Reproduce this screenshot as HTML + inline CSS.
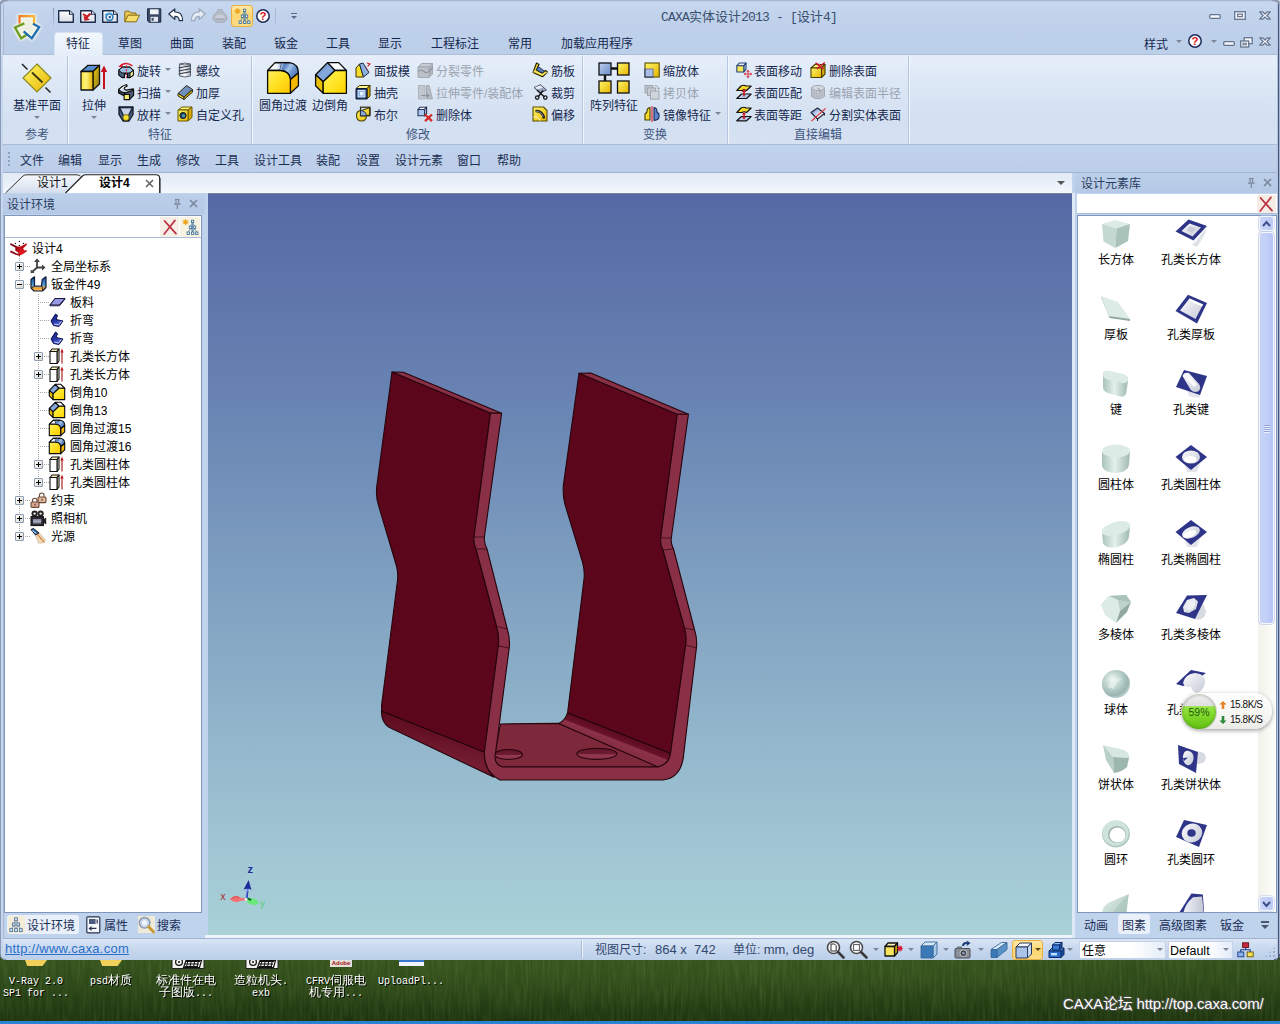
<!DOCTYPE html>
<html><head><meta charset="utf-8"><title>CAXA</title>
<style>
*{margin:0;padding:0;box-sizing:border-box}
html,body{width:1280px;height:1024px;overflow:hidden}
body{position:relative;font-family:"Liberation Sans","Noto Sans CJK SC","WenQuanYi Zen Hei",sans-serif;font-size:12px;color:#000;background:#2b4719}
.a{position:absolute}
.t{position:absolute;white-space:nowrap;line-height:16px;height:16px;font-size:12px}
.c{transform:translateX(-50%)}
.rb{color:#15284f}
.dis{color:#9aa3b0}
.lab{color:#3e5580}
.sep{position:absolute;top:56px;width:2px;height:88px;background:linear-gradient(90deg,#b4c6e0 50%,#f3f7fc 50%)}
.arr{position:absolute;width:0;height:0;border-left:3px solid transparent;border-right:3px solid transparent;border-top:3px solid #7b8797}
svg{position:absolute;overflow:visible}
.dt{position:absolute;white-space:nowrap;color:#fff;font-size:12px;line-height:12px;text-align:center;transform:translateX(-50%);font-family:"Liberation Mono","WenQuanYi Zen Hei","Noto Sans CJK SC",monospace;text-shadow:1px 1px 0 #000}
.tt i{font-style:normal;font-family:'Liberation Mono',monospace;font-size:13px;letter-spacing:-0.8px}
.dt i{font-style:normal;font-size:10px;letter-spacing:0}
</style></head><body>
<div class="a" id="desk" style="left:0;top:958px;width:1280px;height:64px;background:linear-gradient(#33501c,#2c4718 40%,#223a12 80%,#1d3310)"></div>
<svg style="left:0;top:958px" width="1280" height="64"><defs><filter id="gr" x="0" y="0" width="100%" height="100%"><feTurbulence type="fractalNoise" baseFrequency="0.35 0.035" numOctaves="2" seed="7"/><feColorMatrix values="0 0 0 0 0.35  0 0 0 0 0.5  0 0 0 0 0.15  0.9 0.9 0 0 -0.72"/></filter><radialGradient id="gl" cx=".5" cy=".2" r=".6"><stop offset="0" stop-color="#4a6a26" stop-opacity=".22"/><stop offset="1" stop-color="#4a6a26" stop-opacity="0"/></radialGradient></defs><rect width="1280" height="64" fill="url(#gl)"/><rect width="1280" height="64" filter="url(#gr)" opacity=".22"/></svg>
<div class="a" style="left:0;top:1021px;width:1280px;height:3px;background:#2a82d2"></div>
<div class="a" style="left:25px;top:960px;width:22px;height:6px;background:#f0cf5a;clip-path:polygon(0 0,100% 0,80% 100%,10% 100%)"></div>
<div class="a" style="left:100px;top:960px;width:22px;height:6px;background:#f0cf5a;clip-path:polygon(0 0,100% 0,80% 100%,10% 100%)"></div>
<svg style="left:172px;top:960px" width="32" height="9"><rect x="0" y="0" width="32" height="8.5" fill="#f2f2ee"/><path d="M0 0V8.5H32V0" fill="none" stroke="#222" stroke-width="1"/><circle cx="7" cy="2" r="3.4" fill="none" stroke="#111" stroke-width="1.2"/><circle cx="7" cy="2" r="1" fill="#111"/><path d="M14 1.5 H28 M13 4 H27 M12.5 6.5 H26 M16 0 L14.5 7 M19.5 0 L18 7 M23 0 L21.5 7 M26.5 0 L25 7" stroke="#111" stroke-width="1"/><path d="M11.5 7.5 L14 0.5 H29.5 L27.5 7.5Z" fill="none" stroke="#111" stroke-width="1.2"/></svg>
<svg style="left:246px;top:960px" width="32" height="9"><rect x="0" y="0" width="32" height="8.5" fill="#f2f2ee"/><path d="M0 0V8.5H32V0" fill="none" stroke="#222" stroke-width="1"/><circle cx="7" cy="2" r="3.4" fill="none" stroke="#111" stroke-width="1.2"/><circle cx="7" cy="2" r="1" fill="#111"/><path d="M14 1.5 H28 M13 4 H27 M12.5 6.5 H26 M16 0 L14.5 7 M19.5 0 L18 7 M23 0 L21.5 7 M26.5 0 L25 7" stroke="#111" stroke-width="1"/><path d="M11.5 7.5 L14 0.5 H29.5 L27.5 7.5Z" fill="none" stroke="#111" stroke-width="1.2"/></svg>
<div class="a" style="left:330px;top:960px;width:22px;height:7px;background:#e4e0dc;font-size:6px;line-height:7px;color:#a01010;font-weight:bold;text-align:center;overflow:hidden">Adobe</div>
<div class="a" style="left:399px;top:960px;width:25px;height:6px;background:#f0f4fa;border-top:2px solid #3a78d0"></div>
<div class="dt" style="left:36px;top:975px"><i>V-Ray 2.0</i></div>
<div class="dt" style="left:36px;top:987px"><i>SP1 for ...</i></div>
<div class="dt" style="left:111px;top:975px"><i>psd</i>材质</div>
<div class="dt" style="left:186px;top:975px">标准件在电</div>
<div class="dt" style="left:186px;top:987px">子图版<i>...</i></div>
<div class="dt" style="left:261px;top:975px">造粒机头<i>.</i></div>
<div class="dt" style="left:261px;top:987px"><i>exb</i></div>
<div class="dt" style="left:336px;top:975px"><i>CFRV</i>伺服电</div>
<div class="dt" style="left:336px;top:987px">机专用<i>...</i></div>
<div class="dt" style="left:411px;top:975px"><i>UploadPl...</i></div>
<div class="a" style="left:1063px;top:995px;font-size:15px;line-height:18px;color:#fff;white-space:nowrap;text-shadow:1px 1px 1px #555,-1px -1px 1px #555;letter-spacing:-0.2px">CAXA论坛 http://top.caxa.com/</div>
<div class="a" id="win" style="left:0;top:0;width:1280px;height:960px;background:#bfd3ed"></div>
<div class="a" style="left:0;top:0;width:1280px;height:55px;background:linear-gradient(#a3b0c6 0,#c6d7ee 2px,#c2d4ec 14px,#bed0ea 30px,#bccfe9 54px,#aabdd9 54px)"></div>
<svg style="left:0;top:0" width="8" height="8"><path d="M0 0 H8 V1 Q1 1 1 8 H0Z" fill="#8e9bb3"/><path d="M0 0 H2.4 Q0 0 0 2.4Z" fill="#fff"/></svg>
<svg style="left:1272px;top:0" width="8" height="8"><path d="M8 0 H0 V1 Q7 1 7 8 H8Z" fill="#8e9bb3"/><path d="M8 0 H5.6 Q8 0 8 2.4Z" fill="#fff"/></svg>
<div class="a" style="left:53px;top:8px;width:1px;height:18px;background:linear-gradient(#8c9cc0,#b4c4e0)"></div>
<div class="a" style="left:1277px;top:4px;width:3px;height:956px;background:linear-gradient(90deg,#b4c4de 0 1px,#46567a 1px 2px,#a4b4d0 2px 3px)"></div>
<div class="a" style="left:0;top:4px;width:4px;height:956px;background:linear-gradient(90deg,#8a9cbc 0 1px,#c8d6ec 1px 3px,#a8b8d4 3px 4px)"></div>
<div class="t tt" style="left:661px;top:8px;color:#3b4f6e;font-size:13px;line-height:17px"><i>CAXA</i>实体设计<i>2013 - [</i>设计<i>4]</i></div>
<svg style="left:13px;top:14px" width="28" height="28" viewBox="0 0 28 28"><defs><linearGradient id="lgo" x1="0" y1="0" x2="1" y2="0"><stop offset="0" stop-color="#f07a28"/><stop offset="1" stop-color="#f8b838"/></linearGradient><filter id="lgf" x="-20%" y="-20%" width="140%" height="140%"><feGaussianBlur stdDeviation="1.1"/></filter></defs>
<g fill="none" stroke="#fdfbe8" stroke-width="4.6" stroke-linejoin="round" stroke-linecap="round" filter="url(#lgf)" opacity=".9"><path d="M6.5 9 V2.2 H21 V10.4"/><path d="M11 9.6 L2 13.5 L8.2 24.4 L13.3 20.9"/><path d="M20.3 10 L26.2 13.1 L18.8 24.4 L11 17.8"/></g>
<path d="M8 4 H20 V11 L24 13.5 L18.5 22 L12 17 L8.5 22 L4 14 L8 11Z" fill="#f6f6e2" opacity=".8"/>
<g fill="none" stroke-width="2.3" stroke-linejoin="miter">
<path d="M6.5 9.4 V2.2 H21 V10.8" stroke="url(#lgo)"/>
<path d="M11.4 9.4 L2 13.5 L8.2 24.4 L13.6 20.7" stroke="#6a9c1e"/>
<path d="M20 9.8 L26.2 13.1 L18.8 24.4 L10.6 17.4" stroke="#1c6eb4"/></g></svg>
<svg style="left:58px;top:8px" width="16" height="16" viewBox="0 0 16 16"><defs><linearGradient id="pga" x1="0" y1="0" x2="0" y2="1"><stop offset="0" stop-color="#fff"/><stop offset="1" stop-color="#d9dde6"/></linearGradient></defs><path d="M0.7 2.7 H11.5 L15.3 6.3 V14.3 H0.7Z" fill="url(#pga)" stroke="#1c2a4a" stroke-width="1.4" stroke-linejoin="round"/><path d="M11.5 2.7 V6.3 H15.3" fill="#eef1f6" stroke="#1c2a4a" stroke-width="1.1"/></svg>
<svg style="left:80px;top:8px" width="16" height="16" viewBox="0 0 16 16"><defs><linearGradient id="pgb" x1="0" y1="0" x2="0" y2="1"><stop offset="0" stop-color="#fff"/><stop offset="1" stop-color="#d9dde6"/></linearGradient></defs><path d="M0.7 2.7 H11.5 L15.3 6.3 V14.3 H0.7Z" fill="url(#pgb)" stroke="#1c2a4a" stroke-width="1.4" stroke-linejoin="round"/><path d="M11.5 2.7 V6.3 H15.3" fill="#eef1f6" stroke="#1c2a4a" stroke-width="1.1"/><path d="M10.5 5.5 L6 10" stroke="#c81820" stroke-width="2.2"/><path d="M3.5 7.5 L10 11.8 L4.5 12.8Z" fill="#c81820"/><path d="M3 6 L7 8.5" stroke="#c81820" stroke-width="1.6"/></svg>
<svg style="left:102px;top:8px" width="16" height="16" viewBox="0 0 16 16"><defs><linearGradient id="pgc" x1="0" y1="0" x2="0" y2="1"><stop offset="0" stop-color="#fff"/><stop offset="1" stop-color="#d9dde6"/></linearGradient></defs><path d="M0.7 2.7 H11.5 L15.3 6.3 V14.3 H0.7Z" fill="url(#pgc)" stroke="#1c2a4a" stroke-width="1.4" stroke-linejoin="round"/><path d="M11.5 2.7 V6.3 H15.3" fill="#eef1f6" stroke="#1c2a4a" stroke-width="1.1"/><circle cx="7.5" cy="9" r="3.4" fill="none" stroke="#2a7cc0" stroke-width="1.6"/><circle cx="7.8" cy="9" r="1.2" fill="#2a5a90"/><path d="M3 7 Q6 4 10 5.5" stroke="#58b0e0" stroke-width="1.2" fill="none"/></svg>
<svg style="left:124px;top:8px" width="16" height="16" viewBox="0 0 16 16"><path d="M0.8 13.5 V4.2 Q0.8 3.2 1.8 3.2 H5.2 L6.8 5 H12 V7" fill="#e8c858" stroke="#8a6a10" stroke-width="1"/><path d="M0.8 13.8 L4 7.2 H15.6 L12.2 13.8Z" fill="#f6dc6a" stroke="#8a6a10" stroke-width="1" stroke-linejoin="round"/></svg>
<svg style="left:146px;top:8px" width="16" height="16" viewBox="0 0 16 16"><path d="M1.5 0.8 H14.8 V14.2 H3 L1.5 12.8Z" fill="#3a4a68" stroke="#1d2a44" stroke-width="1"/><rect x="4" y="1.3" width="8.6" height="5" fill="#f2f4f8"/><rect x="4.6" y="8.8" width="7.4" height="5" fill="#e4e8f0"/><rect x="5.6" y="9.8" width="2" height="3" fill="#3a4a68"/></svg>
<svg style="left:168px;top:8px" width="16" height="16" viewBox="0 0 16 16"><path d="M0.8 6 L6.8 1 V4 Q14.5 3.6 14.6 12.6 H11.2 Q11.2 8.2 6.8 8.4 V11.4Z" fill="#fff" stroke="#26324e" stroke-width="1.2" stroke-linejoin="round"/></svg>
<svg style="left:190px;top:8px" width="16" height="16" viewBox="0 0 16 16"><path d="M15.2 6 L9.2 1 V4 Q1.5 3.6 1.4 12.6 H4.8 Q4.8 8.2 9.2 8.4 V11.4Z" fill="#e6ecf5" stroke="#9aa6ba" stroke-width="1.2" stroke-linejoin="round"/></svg>
<svg style="left:212px;top:8px" width="16" height="16" viewBox="0 0 16 16"><path d="M6 1.5 H10 L11 4 Q15 6.5 15.5 11 L12 14.5 H4 L0.5 11 Q1 6.5 5 4Z" fill="#b4bac6" stroke="#a2a8b6" stroke-width=".8"/><ellipse cx="8" cy="9" rx="4.5" ry="2.6" fill="#c9ced8"/><path d="M4 11 H12" stroke="#949aaa" stroke-width="1"/></svg>
<div class="a" style="left:231px;top:5px;width:22px;height:22px;border:1px solid #e8b040;border-radius:3px;background:linear-gradient(#fde9a8,#fbd670 50%,#fcdc86)"></div>
<svg style="left:234px;top:8px" width="17" height="16" viewBox="0 0 17 16"><g stroke="#e8a020" stroke-width="1.1"><path d="M3.5 .2V6M.6 3.1H6.4M1.5 1.1L5.5 5.1M5.5 1.1L1.5 5.1"/></g><circle cx="3.5" cy="3.1" r="1.5" fill="#f0a818"/><path d="M10.5 3.5 L8.5 7 M10.5 3.5 L12.5 7 M8.5 9.5 L6.3 13 M8.5 9.5 L10.7 13 M12.5 9.5 L10.7 13 M12.5 9.5 L14.8 13 M10.5 3.5 V13" stroke="#6a90b0" stroke-width=".9" fill="none"/><g fill="#eef6fb" stroke="#4a7898" stroke-width=".9"><rect x="9.4" y="1.2" width="2.3" height="2.4"/><rect x="7.3" y="7" width="2.3" height="2.5"/><rect x="11.4" y="7" width="2.3" height="2.5"/><rect x="5.1" y="13" width="2.4" height="2.5"/><rect x="9.5" y="13" width="2.4" height="2.5"/><rect x="13.6" y="13" width="2.4" height="2.5"/></g></svg>
<svg style="left:256px;top:9px" width="14" height="14" viewBox="0 0 14 14"><circle cx="7" cy="7" r="6.2" fill="#fff" stroke="#1e2a5a" stroke-width="1.5"/><text x="7" y="11" text-anchor="middle" font-family="Liberation Sans,sans-serif" font-weight="bold" font-size="11.5" fill="#d8141c">?</text></svg>
<div class="a" style="left:275px;top:8px;width:1px;height:16px;background:#a9bbd6"></div>
<div class="a" style="left:291px;top:13px;width:6px;height:1px;background:#5b6b85"></div><div class="arr" style="left:291px;top:16px;border-top-color:#5b6b85"></div>
<svg style="left:1209px;top:14px" width="12" height="5" viewBox="0 0 12 5"><rect x=".7" y=".7" width="10.6" height="3.6" rx="1" fill="#f4f7fc" stroke="#66748e" stroke-width="1.3"/></svg>
<svg style="left:1234px;top:11px" width="12" height="9" viewBox="0 0 12 9"><rect x=".7" y=".7" width="10.6" height="7.6" fill="#f4f7fc" stroke="#66748e" stroke-width="1.3"/><rect x="3.6" y="3.2" width="4.8" height="2.4" fill="#f4f7fc" stroke="#66748e" stroke-width="1.2"/></svg>
<svg style="left:1259px;top:11px" width="12" height="9" viewBox="0 0 12 9"><path d="M.7 .8 H3.6 L6 3 L8.4 .8 H11.3 L7.9 4.5 L11.3 8.2 H8.4 L6 6 L3.6 8.2 H.7 L4.1 4.5Z" fill="#f4f7fc" stroke="#66748e" stroke-width="1.2" stroke-linejoin="round"/></svg>
<div class="t rb" style="left:1144px;top:37px">样式</div>
<div class="arr" style="left:1176px;top:40px"></div>
<svg style="left:1188px;top:34px" width="14" height="14" viewBox="0 0 14 14"><circle cx="7" cy="7" r="6.2" fill="#fff" stroke="#1e2a5a" stroke-width="1.5"/><text x="7" y="11" text-anchor="middle" font-family="Liberation Sans,sans-serif" font-weight="bold" font-size="11.5" fill="#d8141c">?</text></svg>
<div class="arr" style="left:1211px;top:40px"></div>
<svg style="left:1223px;top:41px" width="12" height="5" viewBox="0 0 12 5"><rect x=".7" y=".7" width="10.6" height="3.6" rx="1" fill="#f4f7fc" stroke="#66748e" stroke-width="1.3"/></svg>
<svg style="left:1240px;top:37px" width="13" height="11" viewBox="0 0 13 11"><rect x="4.2" y=".7" width="8" height="6" fill="#f4f7fc" stroke="#66748e" stroke-width="1.3"/><rect x=".7" y="4" width="8" height="6" fill="#f4f7fc" stroke="#66748e" stroke-width="1.3"/><rect x="3" y="6.2" width="3.4" height="1.6" fill="none" stroke="#66748e" stroke-width="1"/></svg>
<svg style="left:1259px;top:37px" width="12" height="9" viewBox="0 0 12 9"><path d="M.7 .8 H3.6 L6 3 L8.4 .8 H11.3 L7.9 4.5 L11.3 8.2 H8.4 L6 6 L3.6 8.2 H.7 L4.1 4.5Z" fill="#f4f7fc" stroke="#66748e" stroke-width="1.2" stroke-linejoin="round"/></svg>
<div class="a" style="left:54px;top:32px;width:49px;height:24px;background:linear-gradient(#f2f7fd,#e6eefa);border-radius:4px 4px 0 0;border:1px solid #d5e1f2;border-bottom:none"></div>
<div class="t rb" style="left:66px;top:36px">特征</div>
<div class="t rb" style="left:118px;top:36px">草图</div>
<div class="t rb" style="left:170px;top:36px">曲面</div>
<div class="t rb" style="left:222px;top:36px">装配</div>
<div class="t rb" style="left:274px;top:36px">钣金</div>
<div class="t rb" style="left:326px;top:36px">工具</div>
<div class="t rb" style="left:378px;top:36px">显示</div>
<div class="t rb" style="left:431px;top:36px">工程标注</div>
<div class="t rb" style="left:508px;top:36px">常用</div>
<div class="t rb" style="left:561px;top:36px">加载应用程序</div>
<div class="a" style="left:3px;top:55px;width:1274px;height:90px;background:linear-gradient(#e6eefa,#dde8f6 30%,#d3e0f1 75%,#d6e2f2);border-bottom:1px solid #a9bdd9"></div>
<div class="sep" style="left:67px"></div>
<div class="sep" style="left:251px"></div>
<div class="sep" style="left:582px"></div>
<div class="sep" style="left:727px"></div>
<div class="sep" style="left:908px"></div>
<svg style="left:21px;top:62px" width="32" height="32" viewBox="0 0 32 32"><defs><linearGradient id="dg" x1="0" y1="0" x2="1" y2="1"><stop offset="0" stop-color="#fff76a"/><stop offset="1" stop-color="#e6b400"/></linearGradient></defs><path d="M1 2 L6.5 7.5 M24.5 25.5 L29.5 30.5" stroke="#2a2a2a" stroke-width="1.6"/><path d="M16 2 L30 16 L16 30 L2 16Z" fill="url(#dg)" stroke="#8a8620" stroke-width="1.2"/><path d="M11 10.5 L21.5 20.5" stroke="#3a3410" stroke-width="1.8"/></svg>
<div class="t rb c" style="left:37px;top:98px">基准平面</div>
<div class="arr" style="left:34px;top:116px"></div>
<div class="t lab c" style="left:37px;top:127px">参考</div>
<svg style="left:80px;top:63px" width="28" height="28" viewBox="0 0 28 28"><defs><linearGradient id="ef" x1="0" y1="0" x2="1" y2="0"><stop offset="0" stop-color="#ffe640"/><stop offset=".45" stop-color="#fff27a"/><stop offset="1" stop-color="#e2b000"/></linearGradient><linearGradient id="er" x1="0" y1="0" x2="1" y2="1"><stop offset="0" stop-color="#f0c800"/><stop offset="1" stop-color="#8a7a28"/></linearGradient></defs><g stroke="#111" stroke-width="1.3" stroke-linejoin="round"><path d="M1 8.5 L8 2.3 H19.5 L13 8.5Z" fill="#5a8fd0"/><path d="M13 8.5 L19.5 2.3 V21 L13 27Z" fill="url(#er)"/><rect x="1" y="8.5" width="12" height="18.5" fill="url(#ef)"/></g><path d="M24 26 V6" stroke="#c8101c" stroke-width="2"/><path d="M20.8 9 L24 2.5 L27.2 9Z" fill="#c8101c"/></svg>
<div class="t rb c" style="left:94px;top:98px">拉伸</div>
<div class="arr" style="left:91px;top:116px"></div>
<svg style="left:118px;top:62px" width="16" height="16" viewBox="0 0 16 16"><path d="M.8 8.2 L4.2 5.2 H11.8 L15.4 8.4 V13 L12 15.6 H9.6 V12.4 L8 11.6 L6.4 12.4 V15.6 H4 L.8 13Z" fill="#4a6484" stroke="#0a0a0a" stroke-width="1.2" stroke-linejoin="round"/><path d="M.8 8.2 L4.2 5.2 H11.8 L15.4 8.4 L12 11 H4Z" fill="#9cc0e0" stroke="#0a0a0a" stroke-width="1"/><path d="M12 11 L15.4 8.4 V13 L12 15.6Z" fill="#f6f29a" stroke="#0a0a0a" stroke-width="1"/><path d="M8.4 3.4 V15.8" stroke="#d81828" stroke-width="1" stroke-dasharray="2.2 1.4"/><path d="M2.6 3.6 Q8 -.8 14.4 3.8" stroke="#d81828" stroke-width="1.5" fill="none"/><path d="M0 4.6 L4.8 1.8 L4.2 5.4Z" fill="#d81828"/></svg>
<div class="t rb" style="left:137px;top:64px">旋转</div>
<div class="arr" style="left:165px;top:68px"></div>
<svg style="left:118px;top:84px" width="16" height="16" viewBox="0 0 16 16"><g stroke="#0c0c0c" stroke-width="1.1" stroke-linejoin="round"><path d="M.7 5.4 L.5 9.1 L6.1 11.7 V10.5 L7.3 8.7 L3 7.7Z" fill="#3a4a62"/><path d="M7.3 8.7 L15.6 6.1 V11.4 L11.5 15.6 V10.5 H6.1Z" fill="#4a5a72"/><path d="M8.7 .6 Q3.4 2.2 .7 5.4 L3 7.7 L7.3 8.7 L15.6 6.1 L15.4 4.9 L8.2 6.1 Q5.6 5.4 6.5 3.6 Q7.4 2.6 9.1 2.1Z" fill="#d4dde9"/><rect x="6.1" y="10.5" width="5.4" height="5.1" fill="#f6ec6a"/></g><path d="M2.4 5.6 Q4 3.2 7.6 1.8" stroke="#fff" stroke-width=".9" fill="none"/></svg>
<div class="t rb" style="left:137px;top:86px">扫描</div>
<div class="arr" style="left:165px;top:90px"></div>
<svg style="left:118px;top:106px" width="16" height="16" viewBox="0 0 16 16"><path d="M1 1 H15 V8.5 L11 15 H5 L1 8.5Z" fill="#4a5f80" stroke="#0f1624" stroke-width="1.3" stroke-linejoin="round"/><path d="M3 2.5 H13 L10 9 H6Z" fill="#c8d4e6"/><path d="M1 1 L5.5 10 M15 1 L10.5 10" stroke="#0f1624" stroke-width="1"/><circle cx="8" cy="11.6" r="3" fill="#f8e030" stroke="#6a5a00" stroke-width=".8"/></svg>
<div class="t rb" style="left:137px;top:108px">放样</div>
<div class="arr" style="left:165px;top:112px"></div>
<svg style="left:177px;top:62px" width="16" height="16" viewBox="0 0 16 16"><defs><linearGradient id="th" x1="0" y1="0" x2="1" y2="0"><stop offset="0" stop-color="#c4c8d2"/><stop offset=".45" stop-color="#fff"/><stop offset="1" stop-color="#a8aebc"/></linearGradient></defs><path d="M2.5 2 Q8 .2 13.5 2 V14 Q8 16 2.5 14Z" fill="url(#th)" stroke="#5a6272" stroke-width="1"/><path d="M1.5 6 L14 3.6 M1.5 9 L14 6.6 M1.5 12 L14 9.6" stroke="#3a4252" stroke-width="1.2"/><path d="M2.5 2 Q8 4 13.5 2" stroke="#5a6272" stroke-width=".9" fill="none"/></svg>
<div class="t rb" style="left:196px;top:64px">螺纹</div>
<svg style="left:177px;top:84px" width="16" height="16" viewBox="0 0 16 16"><g stroke="#2a2a18" stroke-width="1" stroke-linejoin="round"><path d="M1 9.5 L9.5 1.5 L15.5 5.5 L7 13Z" fill="#6f8fbc"/><path d="M1 9.5 L7 13 V15.5 L1 12Z" fill="#f2d62a"/><path d="M7 13 L15.5 5.5 V8.2 L7 15.5Z" fill="#c8a800"/></g></svg>
<div class="t rb" style="left:196px;top:86px">加厚</div>
<svg style="left:177px;top:106px" width="16" height="16" viewBox="0 0 16 16"><defs><linearGradient id="chg" x1="0" y1="0" x2="1" y2="1"><stop offset="0" stop-color="#fff76a"/><stop offset="1" stop-color="#e6b400"/></linearGradient></defs><g stroke="#6a5a00" stroke-width="1" stroke-linejoin="round"><path d="M1 4 L5 1 H15 L11 4Z" fill="#fff47a"/><path d="M11 4 L15 1 V11.5 L11 15Z" fill="#d8a800"/><rect x="1" y="4" width="10" height="11" fill="url(#chg)"/></g><circle cx="6" cy="9.5" r="3.1" fill="#1f4a5e" stroke="#0a1a22" stroke-width=".9"/><circle cx="6.6" cy="9.8" r="1.5" fill="#5a9ab0"/></svg>
<div class="t rb" style="left:196px;top:108px">自定义孔</div>
<div class="t lab c" style="left:160px;top:127px">特征</div>
<svg style="left:267px;top:62px" width="32" height="32" viewBox="0 0 32 32"><defs><linearGradient id="ff" x1="0" y1="0" x2="1" y2="1"><stop offset="0" stop-color="#fff060"/><stop offset=".5" stop-color="#ffe020"/><stop offset="1" stop-color="#ffc400"/></linearGradient><linearGradient id="fb" x1="0" y1="0" x2="1" y2=".6"><stop offset="0" stop-color="#6a8cc8"/><stop offset=".3" stop-color="#5f86c4"/><stop offset=".5" stop-color="#a8c6e8"/><stop offset=".7" stop-color="#6f98d0"/><stop offset="1" stop-color="#4a74b4"/></linearGradient><linearGradient id="ft" x1="0" y1="0" x2="1" y2="0"><stop offset="0" stop-color="#fff"/><stop offset=".6" stop-color="#f2f5fb"/><stop offset="1" stop-color="#7f9fd2"/></linearGradient></defs><g stroke="#0a0a0a" stroke-width="1.3" stroke-linejoin="round"><path d="M0.6 8.5 L8 .6 H16 L13.2 8.5Z" fill="url(#ft)"/><path d="M13.2 8.5 L15 .6 H22.5 Q31.4 2 31.4 11 L23.4 17.4 Q22.5 9 13.2 8.5Z" fill="url(#fb)"/><path d="M23.4 17.4 L31.4 11 V23.7 L23.4 31.3Z" fill="#f6b800"/><path d="M0.6 8.5 H13.2 Q22.5 9 23.4 17.4 V31.3 H0.6Z" fill="url(#ff)"/></g><path d="M8 .6 H22.5" stroke="#0a0a0a" stroke-width="1.3"/><path d="M13.6 7.8 L15.6 1.2" stroke="#9db6dc" stroke-width="1.6"/></svg>
<div class="t rb c" style="left:283px;top:98px">圆角过渡</div>
<svg style="left:315px;top:62px" width="32" height="32" viewBox="0 0 32 32"><defs><linearGradient id="cf" x1="0" y1="0" x2="1" y2="1"><stop offset="0" stop-color="#fff060"/><stop offset=".5" stop-color="#ffe628"/><stop offset="1" stop-color="#ffd000"/></linearGradient><linearGradient id="cb" x1="0" y1="0" x2="1" y2="1"><stop offset="0" stop-color="#5a84c4"/><stop offset=".5" stop-color="#86aadc"/><stop offset="1" stop-color="#6a94cc"/></linearGradient></defs><g stroke="#0a0a0a" stroke-width="1.3" stroke-linejoin="round"><path d="M12.5 .6 H23.8 L31.4 8.5 H19.9Z" fill="#fbfcfe"/><path d="M.6 12.75 L12.5 .6 L19.9 8.5 L8.2 19.8Z" fill="url(#cb)"/><path d="M.6 12.75 L8.2 19.8 V31.3 L.6 23.7Z" fill="#e8c000"/><path d="M19.9 8.5 H31.4 V31.3 H8.2 V19.8Z" fill="url(#cf)"/></g></svg>
<div class="t rb c" style="left:330px;top:98px">边倒角</div>
<svg style="left:355px;top:62px" width="16" height="16" viewBox="0 0 16 16"><g stroke="#3a3200" stroke-width="1" stroke-linejoin="round"><path d="M1 15 V6 L4.5 2 L8.5 15Z" fill="#f6dc2a"/><path d="M4.5 2 L8 1 L14 10.5 L8.5 15Z" fill="#8ab0dc" stroke="#1c2c48"/></g><path d="M10.5 5 L13.5 9" stroke="#c82020" stroke-width="1" stroke-dasharray="1.4 1"/><path d="M12 1 L15 2 L12.6 4.4" fill="none" stroke="#c82020" stroke-width="1.1"/></svg>
<div class="t rb" style="left:374px;top:64px">面拔模</div>
<svg style="left:355px;top:84px" width="16" height="16" viewBox="0 0 16 16"><g stroke="#3a3200" stroke-width="1" stroke-linejoin="round"><path d="M1 4.5 L4.5 1.5 H15 L12 4.5Z" fill="#fff690"/><path d="M12 4.5 L15 1.5 V12 L12 15Z" fill="#d8ac00"/><rect x="1" y="4.5" width="11" height="10.5" fill="#24447a" stroke="#0c1830"/></g><rect x="3" y="6.5" width="7" height="6.5" fill="#8ab4e4" stroke="#f4f8ff" stroke-width=".8"/><rect x="5" y="8" width="3.4" height="3.4" fill="#e8f2ff"/></svg>
<div class="t rb" style="left:374px;top:86px">抽壳</div>
<svg style="left:355px;top:106px" width="16" height="16" viewBox="0 0 16 16"><defs><linearGradient id="bg1" x1="0" y1="0" x2="1" y2="1"><stop offset="0" stop-color="#fff76a"/><stop offset="1" stop-color="#e6b400"/></linearGradient></defs><path d="M1.5 9.5 Q1.5 4.5 6.5 4.5 L15 1.5 V9 L11.5 9.5 Q11.5 15 6.5 15 Q1.5 15 1.5 9.5Z" fill="url(#bg1)" stroke="#4a3e00" stroke-width="1.1" stroke-linejoin="round"/><rect x="5.5" y="1.2" width="9.3" height="8.6" fill="none" stroke="#2a2a10" stroke-width="1.2"/><path d="M5.5 4.6 Q11 4.6 11.4 9.8 H5.5Z" fill="#8aa8d4" stroke="#1c2c48" stroke-width=".9"/></svg>
<div class="t rb" style="left:374px;top:108px">布尔</div>
<svg style="left:417px;top:62px" width="16" height="16" viewBox="0 0 16 16"><g stroke="#a2a8b2" stroke-width="1" stroke-linejoin="round"><path d="M1 5 L4.5 1.5 H15.5 L12 5Z" fill="#c6cad2"/><path d="M12 5 L15.5 1.5 V12 L12 15.5Z" fill="#aeb3bd"/><rect x="1" y="5" width="11" height="10.5" fill="#bcc0c9"/></g><path d="M1 9.5 Q4 7 7 9.5 T12 9 L15.5 6" stroke="#8e949e" stroke-width="1.1" fill="none"/></svg>
<div class="t dis" style="left:436px;top:64px">分裂零件</div>
<svg style="left:417px;top:84px" width="16" height="16" viewBox="0 0 16 16"><path d="M1.5 1.5 H8 V15 H1.5Z" fill="#c2c6ce" stroke="#aeb3bd" stroke-width="1"/><path d="M9.5 1.5 H12 L15.5 15 H9.5Z" fill="#b8bcc5" stroke="#a6abb5" stroke-width="1"/><path d="M4 11.5 H11.5 M9.5 9.5 L11.8 11.5 L9.5 13.5" stroke="#8e949e" stroke-width="1.2" fill="none"/></svg>
<div class="t dis" style="left:436px;top:86px">拉伸零件/装配体</div>
<svg style="left:417px;top:106px" width="16" height="16" viewBox="0 0 16 16"><g stroke="#24345a" stroke-width="1.1" stroke-linejoin="round"><path d="M1 3.5 L3 1.2 H9.6 L7.6 3.5Z" fill="#fff"/><path d="M7.6 3.5 L9.6 1.2 V7.6 L7.6 9.8Z" fill="#dfe8f6"/><rect x="1" y="3.5" width="6.6" height="6.3" fill="#a8c8f0"/></g><path d="M8 8.5 L15 15.2 M15 8.5 L8 15.2" stroke="#d82a2a" stroke-width="2.3"/></svg>
<div class="t rb" style="left:436px;top:108px">删除体</div>
<svg style="left:532px;top:62px" width="16" height="16" viewBox="0 0 16 16"><path d="M4.5 1 L7 2.5 L4.5 8 L10 11 L13.5 8.5 L15.5 10 L10.5 14.8 L1 10.5Z" fill="#e8d030" stroke="#2a2400" stroke-width="1.1" stroke-linejoin="round"/><path d="M6.2 4.5 L12.5 9.2 L10 11 L4.5 8Z" fill="#5a7ab8" stroke="#1c2848" stroke-width=".9"/><path d="M1 10.5 L2.6 9.2 L10.4 12.8 L15.5 10" fill="none" stroke="#fff8a0" stroke-width=".8"/></svg>
<div class="t rb" style="left:551px;top:64px">筋板</div>
<svg style="left:532px;top:84px" width="16" height="16" viewBox="0 0 16 16"><path d="M2 3.5 L8.5 .8 L14.5 6 L8 9Z" fill="#9aa6c0" stroke="#4a5268" stroke-width="1" stroke-linejoin="round"/><path d="M3 3.2 L8.4 1.6 L11 3.6 L5.4 5.6Z" fill="#e8ecf4"/><path d="M5 6 L12.5 13 M11 6.5 L6 13" stroke="#1a1a1a" stroke-width="1.5"/><circle cx="5.2" cy="13.6" r="1.7" fill="none" stroke="#1a1a1a" stroke-width="1.3"/><circle cx="13.3" cy="13.6" r="1.7" fill="none" stroke="#1a1a1a" stroke-width="1.3"/></svg>
<div class="t rb" style="left:551px;top:86px">裁剪</div>
<svg style="left:532px;top:106px" width="16" height="16" viewBox="0 0 16 16"><defs><linearGradient id="og1" x1="0" y1="0" x2="1" y2="1"><stop offset="0" stop-color="#fff76a"/><stop offset="1" stop-color="#e6b400"/></linearGradient></defs><path d="M1 1 H11.5 L15 4.5 V15 H1Z" fill="url(#og1)" stroke="#5a4e00" stroke-width="1.1" stroke-linejoin="round"/><path d="M3.5 5 Q10.5 4.5 12 12.5" stroke="#1c1c1c" stroke-width="2.6" fill="none"/><path d="M4 5.2 Q9.6 5.2 11.2 11" stroke="#8a93a8" stroke-width=".9" fill="none"/><path d="M1.5 11 Q6 10 8 14.6" stroke="#fffbd0" stroke-width="1" fill="none"/></svg>
<div class="t rb" style="left:551px;top:108px">偏移</div>
<div class="t lab c" style="left:418px;top:127px">修改</div>
<svg style="left:598px;top:62px" width="32" height="32" viewBox="0 0 32 32"><defs><linearGradient id="pg1" x1="0" y1="0" x2="1" y2="1"><stop offset="0" stop-color="#fff76a"/><stop offset="1" stop-color="#e6b400"/></linearGradient><linearGradient id="pb" x1="0" y1="0" x2="1" y2="1"><stop offset="0" stop-color="#c0d0ee"/><stop offset="1" stop-color="#6a88c8"/></linearGradient></defs><path d="M13 6.5 H20 M7 13 V19" stroke="#111" stroke-width="2.4"/><g stroke="#111" stroke-width="1.3"><rect x="1" y="1" width="12" height="12" fill="url(#pb)"/><rect x="19.5" y="1" width="11.5" height="12" fill="url(#pg1)"/><rect x="1" y="19" width="12" height="12" fill="url(#pg1)"/><rect x="19.5" y="19" width="11.5" height="12" fill="url(#pg1)"/></g></svg>
<div class="t rb c" style="left:614px;top:98px">阵列特征</div>
<svg style="left:644px;top:62px" width="16" height="16" viewBox="0 0 16 16"><defs><linearGradient id="sg1" x1="0" y1="0" x2="1" y2="1"><stop offset="0" stop-color="#fff76a"/><stop offset="1" stop-color="#e6b400"/></linearGradient></defs><rect x="1" y="1" width="14.2" height="14" fill="url(#sg1)" stroke="#5a4e00" stroke-width="1.1"/><rect x="1" y="7.2" width="8" height="7.8" fill="#a8bee6" stroke="#24345a" stroke-width="1.1"/><path d="M1.6 7.2 H9 V14.6" fill="none" stroke="#fff" stroke-width=".8" opacity=".7"/></svg>
<div class="t rb" style="left:663px;top:64px">缩放体</div>
<svg style="left:644px;top:84px" width="16" height="16" viewBox="0 0 16 16"><g stroke="#a2a8b2" stroke-width="1"><rect x="1" y="1.5" width="8" height="7.5" fill="#bcc0c9"/><rect x="3.5" y="4" width="8" height="7.5" fill="#c6cad2"/><rect x="6.5" y="7" width="8.5" height="8.2" fill="#d0d4db"/></g><path d="M11 1.5 Q14.5 1.5 14.5 5 M13 4 L14.5 5.4 L15.8 3.8" stroke="#a2a8b2" stroke-width="1" fill="none"/></svg>
<div class="t dis" style="left:663px;top:86px">拷贝体</div>
<svg style="left:644px;top:106px" width="16" height="16" viewBox="0 0 16 16"><path d="M6 1.5 Q2.8 2 3 6 L1 8 V14 H6Z" fill="#f6dc2a" stroke="#4a3e00" stroke-width="1.1" stroke-linejoin="round"/><path d="M10 1.5 Q13.2 2 13 6 L15 8 V11 Q15 14 10 14.5Z" fill="#5a82cc" stroke="#1c2c58" stroke-width="1.1" stroke-linejoin="round"/><path d="M8 0 V16" stroke="#d81828" stroke-width="1.1"/></svg>
<div class="t rb" style="left:663px;top:108px">镜像特征</div>
<div class="arr" style="left:715px;top:112px"></div>
<div class="t lab c" style="left:655px;top:127px">变换</div>
<svg style="left:736px;top:62px" width="16" height="16" viewBox="0 0 16 16"><g stroke="#24447a" stroke-width="1.1" stroke-linejoin="round"><path d="M.8 3.8 L3.2 1 H10 L7.8 3.8Z" fill="#e8f0fb"/><path d="M7.8 3.8 L10 1 V7.4 L7.8 10Z" fill="#c8d8f0"/><rect x=".8" y="3.8" width="7" height="6.2" fill="#f6e45a"/></g><g stroke="#d84050" stroke-width="1.1" fill="none"><path d="M12 8.5 V15.5 M8.5 12 H15.5"/><path d="M10.8 9.8 L12 8.5 L13.2 9.8 M10.8 14.2 L12 15.5 L13.2 14.2 M9.8 10.8 L8.5 12 L9.8 13.2 M14.2 10.8 L15.5 12 L14.2 13.2"/></g></svg>
<div class="t rb" style="left:754px;top:64px">表面移动</div>
<svg style="left:736px;top:84px" width="16" height="16" viewBox="0 0 16 16"><g stroke="#111" stroke-width="1.2" stroke-linejoin="round"><path d="M.8 14.5 L5.5 10 H15.2 L10.5 14.5Z" fill="#b8ccf0"/><path d="M.8 6.5 L5 2 Q8 .5 10 2 H15.2 L10.5 6.5 Q8 5 6 6.5Z" fill="#f6dc2a"/></g><path d="M8 12.5 V6.5" stroke="#c81820" stroke-width="1.6"/><path d="M5.6 8 L8 4.6 L10.4 8Z" fill="#c81820"/></svg>
<div class="t rb" style="left:754px;top:86px">表面匹配</div>
<svg style="left:736px;top:106px" width="16" height="16" viewBox="0 0 16 16"><g stroke="#111" stroke-width="1.2" stroke-linejoin="round"><path d="M.8 14.8 L5.5 10.5 H15.2 L10.5 14.8Z" fill="#b8ccf0"/><path d="M.8 6.5 L5 2 Q8 .5 10 2 H15.2 L10.5 6.5 Q8 5 6 6.5Z" fill="#f6dc2a"/></g><path d="M8 12.6 V7" stroke="#c81820" stroke-width="1.4"/><path d="M6 8.4 L8 6 L10 8.4Z M6 11.2 L8 13.6 L10 11.2Z" fill="#c81820"/></svg>
<div class="t rb" style="left:754px;top:108px">表面等距</div>
<svg style="left:810px;top:62px" width="16" height="16" viewBox="0 0 16 16"><defs><linearGradient id="dfg" x1="0" y1="0" x2="1" y2="1"><stop offset="0" stop-color="#fff76a"/><stop offset="1" stop-color="#e6b400"/></linearGradient></defs><g stroke="#4a3e00" stroke-width="1.1" stroke-linejoin="round"><path d="M1 6 L5 2.5 H15 L11.5 6Z" fill="#fff47a"/><path d="M11.5 6 L15 2.5 V12 L11.5 15.5Z" fill="#d8a800"/><rect x="1" y="6" width="10.5" height="9.5" fill="url(#dfg)"/></g><path d="M5.5 .8 L13.5 7.2 M14.8 .5 L7 7" stroke="#c81c24" stroke-width="1.6"/><path d="M8.5 1.5 L12 5" stroke="#e85a5a" stroke-width="1"/></svg>
<div class="t rb" style="left:829px;top:64px">删除表面</div>
<svg style="left:810px;top:84px" width="16" height="16" viewBox="0 0 16 16"><path d="M1.5 4 V12.5 Q8 17 14.5 12.5 V4Z" fill="#c2c6ce" stroke="#a2a8b2" stroke-width="1"/><ellipse cx="8" cy="4" rx="6.5" ry="2.6" fill="#d4d8de" stroke="#a2a8b2" stroke-width="1"/><path d="M4 6.3 V14 M6.5 6.6 V14.8 M9.5 6.6 V14.8 M12 6.3 V14 M1.5 8 Q8 12 14.5 8 M1.5 10.5 Q8 14.5 14.5 10.5" stroke="#aeb3bd" stroke-width=".7" fill="none"/><path d="M8 4 L11 8" stroke="#9096a2" stroke-width="1"/></svg>
<div class="t dis" style="left:829px;top:86px">编辑表面半径</div>
<svg style="left:810px;top:106px" width="16" height="16" viewBox="0 0 16 16"><defs><linearGradient id="sfg" x1="0" y1="0" x2="1" y2="1"><stop offset="0" stop-color="#5a7ac8"/><stop offset=".6" stop-color="#e8eefa"/><stop offset="1" stop-color="#fff"/></linearGradient></defs><path d="M1 6.5 L7.5 2 L14.5 7.5 L7.5 13Z" fill="url(#sfg)" stroke="#1c2438" stroke-width="1.1" stroke-linejoin="round"/><path d="M1.5 15 L15.5 2.5" stroke="#d83a3a" stroke-width="1.1"/><path d="M7.5 13 V15 M14.5 7.5 V9.5" stroke="#1c2438" stroke-width="1"/></svg>
<div class="t rb" style="left:829px;top:108px">分割实体表面</div>
<div class="t lab c" style="left:818px;top:127px">直接编辑</div>
<div class="a" style="left:3px;top:146px;width:1274px;height:27px;background:linear-gradient(#c1d3ec,#bbcde8);border-bottom:1px solid #a1b4d2"></div>
<div class="a" style="left:8px;top:152px;width:2px;height:14px;background:repeating-linear-gradient(#8ea3c2 0 2px,transparent 2px 4px)"></div>
<div class="t" style="left:20px;top:153px;color:#1b2f55">文件</div>
<div class="t" style="left:58px;top:153px;color:#1b2f55">编辑</div>
<div class="t" style="left:98px;top:153px;color:#1b2f55">显示</div>
<div class="t" style="left:137px;top:153px;color:#1b2f55">生成</div>
<div class="t" style="left:176px;top:153px;color:#1b2f55">修改</div>
<div class="t" style="left:215px;top:153px;color:#1b2f55">工具</div>
<div class="t" style="left:254px;top:153px;color:#1b2f55">设计工具</div>
<div class="t" style="left:316px;top:153px;color:#1b2f55">装配</div>
<div class="t" style="left:356px;top:153px;color:#1b2f55">设置</div>
<div class="t" style="left:395px;top:153px;color:#1b2f55">设计元素</div>
<div class="t" style="left:457px;top:153px;color:#1b2f55">窗口</div>
<div class="t" style="left:497px;top:153px;color:#1b2f55">帮助</div>
<div class="a" style="left:3px;top:173px;width:1069px;height:20px;background:linear-gradient(#e0eaf6,#eaf1fa 60%,#f4f8fd)"></div>
<svg style="left:0;top:173px" width="170" height="21" viewBox="0 0 170 21"><defs><linearGradient id="tg" x1="0" y1="0" x2="0" y2="1"><stop offset="0" stop-color="#f6f9fd"/><stop offset="1" stop-color="#d3deec"/></linearGradient></defs><path d="M5.5 20 L23 3 Q24.5 1.8 26.5 1.8 L76 1.8 Q79 1.8 80 3.5 L66 20 Z" fill="url(#tg)"/><path d="M5.5 20 L23 3 Q24.5 1.8 26.5 1.8 L76 1.8 Q79 1.8 80.5 3.2" fill="none" stroke="#333" stroke-width="1"/><path d="M65.5 20 L82.5 3 Q84 1.8 86 1.8 L156 1.8 Q159.6 1.8 159.6 5 L159.6 20 Z" fill="#fff"/><path d="M65.5 20 L82.5 3 Q84 1.8 86 1.8 L156 1.8 Q159.6 1.8 159.6 5 L159.6 20" fill="none" stroke="#222" stroke-width="1.1"/><path d="M160.2 5 V20" stroke="#555" stroke-width="1"/></svg>
<div class="t" style="left:37px;top:175px;color:#111">设计1</div>
<div class="t" style="left:99px;top:175px;color:#000;font-weight:bold;font-family:'Liberation Sans','Noto Sans CJK SC',sans-serif">设计4</div>
<svg style="left:145px;top:179px" width="9" height="9"><path d="M1 1L8 8M8 1L1 8" stroke="#666" stroke-width="1.6"/></svg>
<div class="arr" style="left:1057px;top:181px;border-left-width:4px;border-right-width:4px;border-top-width:4px;border-top-color:#555"></div>
<div class="a" style="left:3px;top:194px;width:202px;height:20px;background:linear-gradient(#bccfe9,#b5c9e6)"></div>
<div class="t" style="left:7px;top:197px;color:#2a3c5e">设计环境</div>
<svg style="left:172px;top:198px" width="10" height="12" viewBox="0 0 10 12"><path d="M3 1.5 H7.5 M4 1.5 V6 M6.6 1.5 V6 M2 6.2 H8.6 M5.3 6.2 V11" stroke="#7a879c" stroke-width="1.2" fill="none"/></svg>
<svg style="left:189px;top:199px" width="9" height="9" viewBox="0 0 9 9"><path d="M1 1 L8 8 M8 1 L1 8" stroke="#7a879c" stroke-width="1.7"/></svg>
<div class="a" style="left:4px;top:215px;width:198px;height:698px;border:1px solid #8096ba;background:#fff"></div>
<div class="a" style="left:5px;top:237px;width:196px;height:1px;background:#a9bbd6"></div>
<div class="a" style="left:160px;top:217px;width:19px;height:20px;background:#f6efe8"></div>
<svg style="left:162px;top:219px" width="16" height="16" viewBox="0 0 16 16"><path d="M2.6 2 L14 14.6" stroke="#b83040" stroke-width="1.8" stroke-linecap="round"/><path d="M13 1.4 L2.2 15" stroke="#c0364a" stroke-width="1.7" stroke-linecap="round"/></svg>
<div class="a" style="left:180px;top:217px;width:20px;height:20px;background:#f7f2e2"></div>
<svg style="left:182px;top:219px" width="17" height="16" viewBox="0 0 17 16"><g stroke="#e8a020" stroke-width="1.1"><path d="M3.5 .2V6M.6 3.1H6.4M1.5 1.1L5.5 5.1M5.5 1.1L1.5 5.1"/></g><circle cx="3.5" cy="3.1" r="1.5" fill="#f0a818"/><path d="M10.5 3.5 L8.5 7 M10.5 3.5 L12.5 7 M8.5 9.5 L6.3 13 M8.5 9.5 L10.7 13 M12.5 9.5 L10.7 13 M12.5 9.5 L14.8 13 M10.5 3.5 V13" stroke="#6a90b0" stroke-width=".9" fill="none"/><g fill="#eef6fb" stroke="#4a7898" stroke-width=".9"><rect x="9.4" y="1.2" width="2.3" height="2.4"/><rect x="7.3" y="7" width="2.3" height="2.5"/><rect x="11.4" y="7" width="2.3" height="2.5"/><rect x="5.1" y="13" width="2.4" height="2.5"/><rect x="9.5" y="13" width="2.4" height="2.5"/><rect x="13.6" y="13" width="2.4" height="2.5"/></g></svg>
<div class="a" style="left:19px;top:256px;width:1px;height:281px;background:repeating-linear-gradient(#a8a8a8 0 1px,transparent 1px 2px)"></div>
<div class="a" style="left:38px;top:294px;width:1px;height:190px;background:repeating-linear-gradient(#a8a8a8 0 1px,transparent 1px 2px)"></div>
<svg style="left:10px;top:240px" width="18" height="16" viewBox="0 0 18 16"><path d="M1 4.2 L7.4 7.6" stroke="#7a0010" stroke-width="1.8" stroke-linecap="round"/><path d="M1 11.6 L6 14 L9.4 15" stroke="#8a0812" stroke-width="1.8" stroke-linecap="round" fill="none"/><path d="M5.4 6.9 L11 6.2 L16.4 3.2 L17 4.6 L13.2 8.6 L14.2 10.6 L16.8 10 L16.6 11.6 L12.6 14.2 L9.2 15.4 L8 12.6 L5.4 10.8Z" fill="#c01018"/><path d="M9 11 L13 10 L15 11.6 L11 14.5 L9.4 14Z" fill="#e8141c"/><path d="M5.6 7.2 L8 7 L7 10.6 L5.6 10.4Z" fill="#8a0812"/><g fill="#1a1a1a"><circle cx="9.4" cy="1.5" r=".7"/><circle cx="5.4" cy="3.4" r=".7"/><circle cx="13.4" cy="3.4" r=".7"/><circle cx="9.4" cy="5.4" r=".7"/></g></svg>
<div class="t" style="left:32px;top:241px">设计4</div>
<div class="a" style="left:19px;top:266px;width:11px;height:1px;background:repeating-linear-gradient(90deg,#a8a8a8 0 1px,transparent 1px 2px)"></div>
<div class="a" style="left:15px;top:262px;width:9px;height:9px;border:1px solid #8f9bb0;background:linear-gradient(135deg,#fff,#d8d8d0);border-radius:1px"></div>
<div class="a" style="left:17px;top:266px;width:5px;height:1px;background:#000"></div>
<div class="a" style="left:19px;top:264px;width:1px;height:5px;background:#000"></div>
<svg style="left:30px;top:258px" width="16" height="16" viewBox="0 0 16 16"><g stroke="#444" stroke-width="1.8" fill="none" stroke-linecap="round"><path d="M7 9.5 V2"/><path d="M7 9.5 H13.5"/><path d="M7 9.5 L2 14"/></g><path d="M4 4 L7 .5 L10 4Z M12 6.5 L15.5 9.5 L12 12.5Z M.6 11.5 L.8 15.2 L4.6 14.8Z" fill="#444"/></svg>
<div class="t" style="left:51px;top:259px">全局坐标系</div>
<div class="a" style="left:19px;top:284px;width:11px;height:1px;background:repeating-linear-gradient(90deg,#a8a8a8 0 1px,transparent 1px 2px)"></div>
<div class="a" style="left:15px;top:280px;width:9px;height:9px;border:1px solid #8f9bb0;background:linear-gradient(135deg,#fff,#d8d8d0);border-radius:1px"></div>
<div class="a" style="left:17px;top:284px;width:5px;height:1px;background:#000"></div>
<svg style="left:30px;top:276px" width="17" height="16" viewBox="0 0 17 16"><defs><linearGradient id="tsg" x1="0" y1="0" x2="0" y2="1"><stop offset="0" stop-color="#1a4a90"/><stop offset=".55" stop-color="#4a9ad8"/><stop offset=".8" stop-color="#f0a030"/><stop offset="1" stop-color="#f8c060"/></linearGradient></defs><path d="M1 3.5 L4.5 .8 V10 H11.5 L12.2 3.5 L16 .8 V11.5 L12.5 15 H4 L1 12Z" fill="url(#tsg)" stroke="#0c1c38" stroke-width="1.2" stroke-linejoin="round"/><path d="M4.5 10 L1.5 12 M11.5 10 L12.5 11.5 V14.5" stroke="#0c1c38" stroke-width=".8" fill="none"/></svg>
<div class="t" style="left:51px;top:277px">钣金件49</div>
<div class="a" style="left:38px;top:302px;width:11px;height:1px;background:repeating-linear-gradient(90deg,#a8a8a8 0 1px,transparent 1px 2px)"></div>
<svg style="left:49px;top:294px" width="17" height="16" viewBox="0 0 17 16"><path d="M1 11 L6 4.5 H16 L10.5 11Z" fill="#9a9ae4" stroke="#16163a" stroke-width="1.1" stroke-linejoin="round"/><path d="M1 11 V11.8 H10.5 L16 5" stroke="#16163a" stroke-width=".9" fill="none"/></svg>
<div class="t" style="left:70px;top:295px">板料</div>
<div class="a" style="left:38px;top:320px;width:11px;height:1px;background:repeating-linear-gradient(90deg,#a8a8a8 0 1px,transparent 1px 2px)"></div>
<svg style="left:49px;top:312px" width="16" height="16" viewBox="0 0 16 16"><defs><linearGradient id="tbg" x1="0" y1="0" x2="1" y2="1"><stop offset="0" stop-color="#101a70"/><stop offset=".5" stop-color="#2a3cb0"/><stop offset="1" stop-color="#8a9aec"/></linearGradient></defs><path d="M2 9 L6.5 2 L8.5 3.5 L7 7.5 L14 9 L10 14.5 L4.5 13.5Z" fill="url(#tbg)" stroke="#0a1050" stroke-width="1" stroke-linejoin="round"/><path d="M5 12 L9.5 12.8 L12.5 9.4" stroke="#c8d0ff" stroke-width=".9" fill="none"/></svg>
<div class="t" style="left:70px;top:313px">折弯</div>
<div class="a" style="left:38px;top:338px;width:11px;height:1px;background:repeating-linear-gradient(90deg,#a8a8a8 0 1px,transparent 1px 2px)"></div>
<svg style="left:49px;top:330px" width="16" height="16" viewBox="0 0 16 16"><defs><linearGradient id="tbg_1" x1="0" y1="0" x2="1" y2="1"><stop offset="0" stop-color="#101a70"/><stop offset=".5" stop-color="#2a3cb0"/><stop offset="1" stop-color="#8a9aec"/></linearGradient></defs><path d="M2 9 L6.5 2 L8.5 3.5 L7 7.5 L14 9 L10 14.5 L4.5 13.5Z" fill="url(#tbg_1)" stroke="#0a1050" stroke-width="1" stroke-linejoin="round"/><path d="M5 12 L9.5 12.8 L12.5 9.4" stroke="#c8d0ff" stroke-width=".9" fill="none"/></svg>
<div class="t" style="left:70px;top:331px">折弯</div>
<div class="a" style="left:38px;top:356px;width:11px;height:1px;background:repeating-linear-gradient(90deg,#a8a8a8 0 1px,transparent 1px 2px)"></div>
<div class="a" style="left:34px;top:352px;width:9px;height:9px;border:1px solid #8f9bb0;background:linear-gradient(135deg,#fff,#d8d8d0);border-radius:1px"></div>
<div class="a" style="left:36px;top:356px;width:5px;height:1px;background:#000"></div>
<div class="a" style="left:38px;top:354px;width:1px;height:5px;background:#000"></div>
<svg style="left:49px;top:348px" width="16" height="16" viewBox="0 0 16 16"><g stroke="#111" stroke-width="1.1" stroke-linejoin="round"><path d="M1 3.5 L3 1 H10 L8 3.5Z" fill="#fbf3b0"/><path d="M8 3.5 L10 1 V13 L8 15.5Z" fill="#fffbe0"/><rect x="1" y="3.5" width="7" height="12" fill="#fff"/></g><path d="M13 15.5 V3" stroke="#a01010" stroke-width="1.1"/><path d="M11.4 4.6 L13 .4 L14.6 4.6Z" fill="#c01818"/></svg>
<div class="t" style="left:70px;top:349px">孔类长方体</div>
<div class="a" style="left:38px;top:374px;width:11px;height:1px;background:repeating-linear-gradient(90deg,#a8a8a8 0 1px,transparent 1px 2px)"></div>
<div class="a" style="left:34px;top:370px;width:9px;height:9px;border:1px solid #8f9bb0;background:linear-gradient(135deg,#fff,#d8d8d0);border-radius:1px"></div>
<div class="a" style="left:36px;top:374px;width:5px;height:1px;background:#000"></div>
<div class="a" style="left:38px;top:372px;width:1px;height:5px;background:#000"></div>
<svg style="left:49px;top:366px" width="16" height="16" viewBox="0 0 16 16"><g stroke="#111" stroke-width="1.1" stroke-linejoin="round"><path d="M1 3.5 L3 1 H10 L8 3.5Z" fill="#fbf3b0"/><path d="M8 3.5 L10 1 V13 L8 15.5Z" fill="#fffbe0"/><rect x="1" y="3.5" width="7" height="12" fill="#fff"/></g><path d="M13 15.5 V3" stroke="#a01010" stroke-width="1.1"/><path d="M11.4 4.6 L13 .4 L14.6 4.6Z" fill="#c01818"/></svg>
<div class="t" style="left:70px;top:367px">孔类长方体</div>
<div class="a" style="left:38px;top:392px;width:11px;height:1px;background:repeating-linear-gradient(90deg,#a8a8a8 0 1px,transparent 1px 2px)"></div>
<svg style="left:49px;top:384px" width="16" height="16" viewBox="0 0 32 32"><defs><linearGradient id="tcf" x1="0" y1="0" x2="1" y2="1"><stop offset="0" stop-color="#fff060"/><stop offset=".5" stop-color="#ffe628"/><stop offset="1" stop-color="#ffd000"/></linearGradient><linearGradient id="tcb" x1="0" y1="0" x2="1" y2="1"><stop offset="0" stop-color="#5a84c4"/><stop offset=".5" stop-color="#86aadc"/><stop offset="1" stop-color="#6a94cc"/></linearGradient></defs><g stroke="#0a0a0a" stroke-width="2.2" stroke-linejoin="round"><path d="M12.5 .6 H23.8 L31.4 8.5 H19.9Z" fill="#fbfcfe"/><path d="M.6 12.75 L12.5 .6 L19.9 8.5 L8.2 19.8Z" fill="url(#tcb)"/><path d="M.6 12.75 L8.2 19.8 V31.3 L.6 23.7Z" fill="#e8c000"/><path d="M19.9 8.5 H31.4 V31.3 H8.2 V19.8Z" fill="url(#tcf)"/></g></svg>
<div class="t" style="left:70px;top:385px">倒角10</div>
<div class="a" style="left:38px;top:410px;width:11px;height:1px;background:repeating-linear-gradient(90deg,#a8a8a8 0 1px,transparent 1px 2px)"></div>
<svg style="left:49px;top:402px" width="16" height="16" viewBox="0 0 32 32"><defs><linearGradient id="tcf_1" x1="0" y1="0" x2="1" y2="1"><stop offset="0" stop-color="#fff060"/><stop offset=".5" stop-color="#ffe628"/><stop offset="1" stop-color="#ffd000"/></linearGradient><linearGradient id="tcb_1" x1="0" y1="0" x2="1" y2="1"><stop offset="0" stop-color="#5a84c4"/><stop offset=".5" stop-color="#86aadc"/><stop offset="1" stop-color="#6a94cc"/></linearGradient></defs><g stroke="#0a0a0a" stroke-width="2.2" stroke-linejoin="round"><path d="M12.5 .6 H23.8 L31.4 8.5 H19.9Z" fill="#fbfcfe"/><path d="M.6 12.75 L12.5 .6 L19.9 8.5 L8.2 19.8Z" fill="url(#tcb_1)"/><path d="M.6 12.75 L8.2 19.8 V31.3 L.6 23.7Z" fill="#e8c000"/><path d="M19.9 8.5 H31.4 V31.3 H8.2 V19.8Z" fill="url(#tcf_1)"/></g></svg>
<div class="t" style="left:70px;top:403px">倒角13</div>
<div class="a" style="left:38px;top:428px;width:11px;height:1px;background:repeating-linear-gradient(90deg,#a8a8a8 0 1px,transparent 1px 2px)"></div>
<svg style="left:49px;top:420px" width="16" height="16" viewBox="0 0 32 32"><defs><linearGradient id="tff" x1="0" y1="0" x2="1" y2="1"><stop offset="0" stop-color="#fff060"/><stop offset=".5" stop-color="#ffe020"/><stop offset="1" stop-color="#ffc400"/></linearGradient><linearGradient id="tfb" x1="0" y1="0" x2="1" y2=".6"><stop offset="0" stop-color="#6a8cc8"/><stop offset=".3" stop-color="#5f86c4"/><stop offset=".5" stop-color="#a8c6e8"/><stop offset=".7" stop-color="#6f98d0"/><stop offset="1" stop-color="#4a74b4"/></linearGradient><linearGradient id="tft" x1="0" y1="0" x2="1" y2="0"><stop offset="0" stop-color="#fff"/><stop offset=".6" stop-color="#f2f5fb"/><stop offset="1" stop-color="#7f9fd2"/></linearGradient></defs><g stroke="#0a0a0a" stroke-width="2.2" stroke-linejoin="round"><path d="M0.6 8.5 L8 .6 H16 L13.2 8.5Z" fill="url(#tft)"/><path d="M13.2 8.5 L15 .6 H22.5 Q31.4 2 31.4 11 L23.4 17.4 Q22.5 9 13.2 8.5Z" fill="url(#tfb)"/><path d="M23.4 17.4 L31.4 11 V23.7 L23.4 31.3Z" fill="#f6b800"/><path d="M0.6 8.5 H13.2 Q22.5 9 23.4 17.4 V31.3 H0.6Z" fill="url(#tff)"/></g><path d="M8 .6 H22.5" stroke="#0a0a0a" stroke-width="2.2"/><path d="M13.6 7.8 L15.6 1.2" stroke="#9db6dc" stroke-width="1.6"/></svg>
<div class="t" style="left:70px;top:421px">圆角过渡15</div>
<div class="a" style="left:38px;top:446px;width:11px;height:1px;background:repeating-linear-gradient(90deg,#a8a8a8 0 1px,transparent 1px 2px)"></div>
<svg style="left:49px;top:438px" width="16" height="16" viewBox="0 0 32 32"><defs><linearGradient id="tff_1" x1="0" y1="0" x2="1" y2="1"><stop offset="0" stop-color="#fff060"/><stop offset=".5" stop-color="#ffe020"/><stop offset="1" stop-color="#ffc400"/></linearGradient><linearGradient id="tfb_1" x1="0" y1="0" x2="1" y2=".6"><stop offset="0" stop-color="#6a8cc8"/><stop offset=".3" stop-color="#5f86c4"/><stop offset=".5" stop-color="#a8c6e8"/><stop offset=".7" stop-color="#6f98d0"/><stop offset="1" stop-color="#4a74b4"/></linearGradient><linearGradient id="tft_1" x1="0" y1="0" x2="1" y2="0"><stop offset="0" stop-color="#fff"/><stop offset=".6" stop-color="#f2f5fb"/><stop offset="1" stop-color="#7f9fd2"/></linearGradient></defs><g stroke="#0a0a0a" stroke-width="2.2" stroke-linejoin="round"><path d="M0.6 8.5 L8 .6 H16 L13.2 8.5Z" fill="url(#tft_1)"/><path d="M13.2 8.5 L15 .6 H22.5 Q31.4 2 31.4 11 L23.4 17.4 Q22.5 9 13.2 8.5Z" fill="url(#tfb_1)"/><path d="M23.4 17.4 L31.4 11 V23.7 L23.4 31.3Z" fill="#f6b800"/><path d="M0.6 8.5 H13.2 Q22.5 9 23.4 17.4 V31.3 H0.6Z" fill="url(#tff_1)"/></g><path d="M8 .6 H22.5" stroke="#0a0a0a" stroke-width="2.2"/><path d="M13.6 7.8 L15.6 1.2" stroke="#9db6dc" stroke-width="1.6"/></svg>
<div class="t" style="left:70px;top:439px">圆角过渡16</div>
<div class="a" style="left:38px;top:464px;width:11px;height:1px;background:repeating-linear-gradient(90deg,#a8a8a8 0 1px,transparent 1px 2px)"></div>
<div class="a" style="left:34px;top:460px;width:9px;height:9px;border:1px solid #8f9bb0;background:linear-gradient(135deg,#fff,#d8d8d0);border-radius:1px"></div>
<div class="a" style="left:36px;top:464px;width:5px;height:1px;background:#000"></div>
<div class="a" style="left:38px;top:462px;width:1px;height:5px;background:#000"></div>
<svg style="left:49px;top:456px" width="16" height="16" viewBox="0 0 16 16"><g stroke="#111" stroke-width="1.1" stroke-linejoin="round"><path d="M1 3.5 L3 1 H10 L8 3.5Z" fill="#fbf3b0"/><path d="M8 3.5 L10 1 V13 L8 15.5Z" fill="#fffbe0"/><rect x="1" y="3.5" width="7" height="12" fill="#fff"/></g><path d="M13 15.5 V3" stroke="#a01010" stroke-width="1.1"/><path d="M11.4 4.6 L13 .4 L14.6 4.6Z" fill="#c01818"/></svg>
<div class="t" style="left:70px;top:457px">孔类圆柱体</div>
<div class="a" style="left:38px;top:482px;width:11px;height:1px;background:repeating-linear-gradient(90deg,#a8a8a8 0 1px,transparent 1px 2px)"></div>
<div class="a" style="left:34px;top:478px;width:9px;height:9px;border:1px solid #8f9bb0;background:linear-gradient(135deg,#fff,#d8d8d0);border-radius:1px"></div>
<div class="a" style="left:36px;top:482px;width:5px;height:1px;background:#000"></div>
<div class="a" style="left:38px;top:480px;width:1px;height:5px;background:#000"></div>
<svg style="left:49px;top:474px" width="16" height="16" viewBox="0 0 16 16"><g stroke="#111" stroke-width="1.1" stroke-linejoin="round"><path d="M1 3.5 L3 1 H10 L8 3.5Z" fill="#fbf3b0"/><path d="M8 3.5 L10 1 V13 L8 15.5Z" fill="#fffbe0"/><rect x="1" y="3.5" width="7" height="12" fill="#fff"/></g><path d="M13 15.5 V3" stroke="#a01010" stroke-width="1.1"/><path d="M11.4 4.6 L13 .4 L14.6 4.6Z" fill="#c01818"/></svg>
<div class="t" style="left:70px;top:475px">孔类圆柱体</div>
<div class="a" style="left:19px;top:500px;width:11px;height:1px;background:repeating-linear-gradient(90deg,#a8a8a8 0 1px,transparent 1px 2px)"></div>
<div class="a" style="left:15px;top:496px;width:9px;height:9px;border:1px solid #8f9bb0;background:linear-gradient(135deg,#fff,#d8d8d0);border-radius:1px"></div>
<div class="a" style="left:17px;top:500px;width:5px;height:1px;background:#000"></div>
<div class="a" style="left:19px;top:498px;width:1px;height:5px;background:#000"></div>
<svg style="left:30px;top:492px" width="17" height="16" viewBox="0 0 17 16"><g stroke="#6a4a38" stroke-width="1.1"><path d="M9.5 5 V3.2 Q9.5 1 11.8 1 Q14 1 14 3.2 V5" fill="none"/><rect x="8" y="5" width="8" height="5.6" rx="1" fill="#e0b8a0"/><path d="M2.5 10 V8.4 Q2.5 6.2 4.8 6.2 Q7 6.2 7 8.4 V10" fill="none"/><rect x="1" y="10" width="8" height="5.4" rx="1" fill="#d8a890"/></g><path d="M12 6.8 V8.8 M5 11.8 V13.8" stroke="#6a4a38" stroke-width="1.2"/></svg>
<div class="t" style="left:51px;top:493px">约束</div>
<div class="a" style="left:19px;top:518px;width:11px;height:1px;background:repeating-linear-gradient(90deg,#a8a8a8 0 1px,transparent 1px 2px)"></div>
<div class="a" style="left:15px;top:514px;width:9px;height:9px;border:1px solid #8f9bb0;background:linear-gradient(135deg,#fff,#d8d8d0);border-radius:1px"></div>
<div class="a" style="left:17px;top:518px;width:5px;height:1px;background:#000"></div>
<div class="a" style="left:19px;top:516px;width:1px;height:5px;background:#000"></div>
<svg style="left:30px;top:510px" width="17" height="16" viewBox="0 0 17 16"><circle cx="4.6" cy="3.6" r="3.1" fill="#222"/><circle cx="10.6" cy="3.6" r="3.1" fill="#222"/><circle cx="4.6" cy="3.6" r="1.2" fill="#e8e8e8"/><circle cx="10.6" cy="3.6" r="1.2" fill="#e8e8e8"/><rect x="1" y="6.6" width="12.4" height="9" fill="#2a2a34" stroke="#111" stroke-width="1"/><rect x="3" y="9" width="8.2" height="4.6" fill="#8a8aa0"/><path d="M3 11.2 H11.2" stroke="#c8c8d8" stroke-width=".8"/><path d="M13.4 9.2 L16.2 7.4 V14.6 L13.4 12.8Z" fill="#222"/></svg>
<div class="t" style="left:51px;top:511px">照相机</div>
<div class="a" style="left:19px;top:536px;width:11px;height:1px;background:repeating-linear-gradient(90deg,#a8a8a8 0 1px,transparent 1px 2px)"></div>
<div class="a" style="left:15px;top:532px;width:9px;height:9px;border:1px solid #8f9bb0;background:linear-gradient(135deg,#fff,#d8d8d0);border-radius:1px"></div>
<div class="a" style="left:17px;top:536px;width:5px;height:1px;background:#000"></div>
<div class="a" style="left:19px;top:534px;width:1px;height:5px;background:#000"></div>
<svg style="left:30px;top:528px" width="16" height="16" viewBox="0 0 16 16"><path d="M5 6.5 L9 4.5 L15.5 12 Q13.5 16 8.5 15Z" fill="#f0d8b8" stroke="#c8b8a0" stroke-width=".7"/><path d="M1 1.5 L3.5 .5 L9 5 L5.5 7Z" fill="#2a5a9a" stroke="#101a30" stroke-width="1" stroke-linejoin="round"/><path d="M2.5 2.5 L6.5 5.6" stroke="#a8d0f0" stroke-width="1.1"/><path d="M7 6 L14.5 14.5" stroke="#d07028" stroke-width="1.1"/></svg>
<div class="t" style="left:51px;top:529px">光源</div>
<div class="a" style="left:7px;top:915px;width:72px;height:19px;background:#e9f0fa;border-radius:3px"></div>
<div class="a" style="left:8px;top:916px;width:17px;height:17px;background:#f2ecd9"></div>
<svg style="left:9px;top:917px" width="14" height="16" viewBox="0 0 14 16"><g fill="#d0e4f2" stroke="#5a7a9a" stroke-width=".9"><rect x="5.5" y=".8" width="3" height="3"/><rect x="3.4" y="6" width="2.8" height="2.8"/><rect x="7.8" y="6" width="2.8" height="2.8"/><rect x=".8" y="11.6" width="2.8" height="3"/><rect x="5.6" y="11.6" width="2.8" height="3"/><rect x="10.4" y="11.6" width="2.8" height="3"/></g><path d="M7 3.8 V5 M4.8 6 L6.4 4.8 M9.2 6 L7.6 4.8 M4.8 8.8 L2.2 11.6 M4.8 8.8 L7 11.6 M9.2 8.8 L7 11.6 M9.2 8.8 L11.8 11.6" stroke="#5a7a9a" stroke-width=".8" fill="none"/></svg>
<div class="t" style="left:27px;top:918px;color:#1b2f55">设计环境</div>
<svg style="left:86px;top:916px" width="15" height="18" viewBox="0 0 15 18"><rect x=".8" y=".8" width="13" height="16" rx="1" fill="#f4f6fa" stroke="#26324e" stroke-width="1.2"/><rect x="3" y="3" width="6.6" height="5" fill="#4a5a7a"/><path d="M11.2 3.4 V7.4" stroke="#26324e" stroke-width="1.2"/><path d="M3.4 12.4 H10.4 M5.6 10.6 L3.4 12.4 L5.6 14.2" stroke="#26324e" stroke-width="1.1" fill="none"/></svg>
<div class="t" style="left:104px;top:918px;color:#1b2f55">属性</div>
<div class="a" style="left:138px;top:916px;width:17px;height:17px;background:#efe9d8"></div>
<svg style="left:138px;top:916px" width="17" height="18" viewBox="0 0 17 18"><circle cx="6.6" cy="6.8" r="5.2" fill="#dce8f8" stroke="#8a98b0" stroke-width="1.6"/><circle cx="6.6" cy="6.8" r="3.2" fill="#f2f7ff" stroke="#b4c4e0" stroke-width=".8"/><path d="M10.6 10.8 L15.4 15.8" stroke="#c89a38" stroke-width="3" stroke-linecap="round"/></svg>
<div class="t" style="left:157px;top:918px;color:#1b2f55">搜索</div>
<div class="a" id="vp" style="left:208px;top:193px;width:864px;height:742px;background:linear-gradient(#5669a5 0,#5b70a8 8%,#6a86b4 30%,#7d9dbf 50%,#8fb3ca 70%,#a0c6d3 88%,#a8d1d8 100%);border-top:1px solid #7b8494"></div>
<svg style="left:208px;top:194px" width="864" height="741" viewBox="208 194 864 741">
<defs>
<linearGradient id="bendL" x1="0" y1="0" x2="-0.36" y2="1"><stop offset="0" stop-color="#5c0a1d"/><stop offset="0.45" stop-color="#741d32"/><stop offset="1" stop-color="#62101f"/></linearGradient>
<linearGradient id="bendR" gradientUnits="userSpaceOnUse" x1="620" y1="733.4" x2="615.2" y2="745.7"><stop offset="0" stop-color="#5c0a1d"/><stop offset="0.5" stop-color="#68122a"/><stop offset="0.62" stop-color="#8c3248"/><stop offset="1" stop-color="#862e44"/></linearGradient>
<linearGradient id="hole" x1="0" y1="0" x2="0" y2="1"><stop offset="0" stop-color="#62142a"/><stop offset="0.5" stop-color="#6c1c30"/><stop offset="0.58" stop-color="#93394f"/><stop offset="1" stop-color="#8c3248"/></linearGradient>
</defs>
<g stroke="#26040c" stroke-width="1.1" stroke-linejoin="round">
<!-- base plate top -->
<path d="M500.5 724 L558.7 723.4 L660 767 L498 767 L494 758 Z" fill="#7e283c"/>
<!-- holes -->
<clipPath id="hc"><path d="M496 740 L700 740 L700 767 L496 767Z"/></clipPath>
<g clip-path="url(#hc)"><ellipse cx="508.5" cy="754.5" rx="14" ry="5" fill="url(#hole)"/><ellipse cx="596.8" cy="753.8" rx="20" ry="5.6" fill="url(#hole)"/></g>
<!-- right plate inner bend -->
<path d="M567.6 712.7 L670.5 753.3 Q669 764 658 767 L558.7 723.4 Q565 721 567.6 712.7Z" fill="url(#bendR)"/>
<!-- left plate outer bend -->
<path d="M381.6 711 L484.4 752 Q484 768 494 777.2 L389 727.3 Q381 722 381.6 711Z" fill="url(#bendL)"/>
<!-- left plate main face -->
<path d="M392 372 L376.8 486 Q375.5 497 379 507 L396.5 566 Q398.5 574 397.3 582 L381.6 705 L381.6 711 L484.4 752 L498.3 646 Q499.5 636 496.5 626 L476 549 Q473.3 543 474 537 L490.5 413.1 Z" fill="#5c061b"/>
<!-- right plate main face -->
<path d="M579 373.3 L563.4 485 Q562.5 495 565 504.5 L582.5 562 Q585 571 584 579 L567.6 712.7 L670.5 753.3 L685.7 645 Q687 636 684.5 628 L663 550 Q660 544 660.7 538 L677.3 414.3 Z" fill="#5c061b"/>
<!-- top strips -->
<path d="M392 372 L403.4 372.3 L501.6 413.3 L490.5 413.1Z" fill="#8a3046"/>
<path d="M579 373.3 L590.8 373 L688.4 414.3 L677.3 414.3Z" fill="#8a3046"/>
<!-- front U thickness face -->
<path d="M490.5 413.1 L474 537 Q473.3 543 476 549 L496.5 626 Q499.5 636 498.3 646 L484.4 752 Q484 772 500 780 L663 780 Q680 778 683.2 758.4 L696.4 648 Q697.5 639 694.6 630 L673.5 549 Q670.5 543 671.3 538 L688.4 414.3 L677.3 414.3 L660.7 538 Q660 544 663 550 L684.5 628 Q687 636 685.7 645 L670.5 753.3 Q669 764 658 767 L503 767 Q495 765 495 757 L509.2 648 Q510.3 639 507.5 630 L487 549 Q483.8 543 484.4 537 L501.6 413.3 Z" fill="#8a3046"/>
<path d="M474 537H484.4M660.7 538H671.3M498.3 646L509.2 648M685.7 645L696.4 648M497 626.5L507.3 629M684.5 628L694.6 630M476 549L487 549M663 550L673.5 549" fill="none" stroke-width="0.7"/>
</g>
</svg>

<svg style="left:218px;top:862px" width="50" height="50" viewBox="0 0 50 50"><path d="M28.4 37 L30 25" stroke="#6a78e4" stroke-width="2"/><path d="M25.6 27.4 L30.6 18 L33.4 27.8 L30 26.6Z" fill="#1c2a9a"/><path d="M29 36 L29.8 30" stroke="#2a3ab4" stroke-width="1"/><path d="M11.5 37 Q18 31.8 23 35.8 L28 36.6 L28 38.6 L23 38.8 Q17 42.5 11.5 37Z" fill="#f07272"/><path d="M14 36 Q18 33.5 21 35.5" stroke="#d84848" stroke-width="1" fill="none"/><ellipse cx="34.5" cy="39.5" rx="6" ry="3.2" transform="rotate(14 34.5 39.5)" fill="#6ae87a"/><path d="M29.5 36.4 L33 38" stroke="#0a6a2a" stroke-width="2"/><circle cx="28" cy="37.4" r="1.4" fill="#f4f4ea"/><text x="29.6" y="11.2" font-family="Liberation Sans,sans-serif" font-size="11" font-weight="bold" fill="#1c2c9a">z</text><text x="2.6" y="38.4" font-family="Liberation Sans,sans-serif" font-size="10" fill="#a82a2a">x</text><text x="42" y="45" font-family="Liberation Sans,sans-serif" font-size="10" fill="#5acc7a">y</text></svg>
<div class="a" style="left:205px;top:935px;width:870px;height:3px;background:#eef3fa"></div>
<div class="a" style="left:1072px;top:193px;width:3px;height:745px;background:#dfe8f5"></div>
<div class="a" style="left:1075px;top:173px;width:202px;height:20px;background:linear-gradient(#bccfe9,#b5c9e6)"></div>
<div class="t" style="left:1081px;top:176px;color:#2a3c5e">设计元素库</div>
<svg style="left:1246px;top:177px" width="10" height="12" viewBox="0 0 10 12"><path d="M3 1.5 H7.5 M4 1.5 V6 M6.6 1.5 V6 M2 6.2 H8.6 M5.3 6.2 V11" stroke="#7a879c" stroke-width="1.2" fill="none"/></svg>
<svg style="left:1263px;top:178px" width="9" height="9" viewBox="0 0 9 9"><path d="M1 1 L8 8 M8 1 L1 8" stroke="#7a879c" stroke-width="1.7"/></svg>
<div class="a" style="left:1077px;top:194px;width:200px;height:20px;background:#fff;border-bottom:1px solid #a9bbd6"></div>
<div class="a" style="left:1257px;top:195px;width:19px;height:18px;background:#f6ece6"></div>
<svg style="left:1258px;top:196px" width="16" height="16" viewBox="0 0 16 16"><path d="M2.6 2 L14 14.6" stroke="#b83040" stroke-width="1.8" stroke-linecap="round"/><path d="M13 1.4 L2.2 15" stroke="#c0364a" stroke-width="1.7" stroke-linecap="round"/></svg>
<div class="a" style="left:1077px;top:215px;width:200px;height:698px;background:#fff;border:1px solid #8096ba"></div>
<div class="a" style="left:1258px;top:216px;width:18px;height:696px;background:linear-gradient(90deg,#f2f2ec,#fdfdfa)"></div>
<div class="a" style="left:1259px;top:216px;width:15px;height:15px;background:linear-gradient(90deg,#cbd6f8,#bccaf4);border:1px solid #f4f7ff;border-radius:3px;box-shadow:0 0 0 .5px #b4c3ea"></div>
<svg style="left:1262px;top:220px" width="9" height="8"><path d="M1 6L4.5 2L8 6" stroke="#3f4f8c" stroke-width="2" fill="none"/></svg>
<div class="a" style="left:1259px;top:232px;width:15px;height:392px;background:linear-gradient(90deg,#c6d3f8,#c2d0f8 50%,#b4c4f4);border:1px solid #f4f7ff;border-radius:3px;box-shadow:0 0 0 .5px #a8b8e0"></div>
<div class="a" style="left:1264px;top:425px;width:6px;height:8px;background:repeating-linear-gradient(#8ea0cf 0 1px,#eef2ff 1px 2px)"></div>
<div class="a" style="left:1259px;top:896px;width:15px;height:15px;background:linear-gradient(90deg,#cbd6f8,#bccaf4);border:1px solid #f4f7ff;border-radius:3px;box-shadow:0 0 0 .5px #b4c3ea"></div>
<svg style="left:1262px;top:900px" width="9" height="8"><path d="M1 2L4.5 6L8 2" stroke="#3f4f8c" stroke-width="2" fill="none"/></svg>
<div class="a" style="left:1078px;top:216px;width:181px;height:696px;overflow:hidden">
<svg style="left:22px;top:3px" width="32" height="30" viewBox="0 0 32 30"><defs><linearGradient id="cbx" x1="0" y1="0" x2="1" y2="0"><stop offset="0" stop-color="#a9c3bb"/><stop offset=".45" stop-color="#e4f0ec"/><stop offset="1" stop-color="#9fb9b1"/></linearGradient><linearGradient id="cbxh" x1="0" y1="0" x2="1" y2="1"><stop offset="0" stop-color="#fbfcfe"/><stop offset="1" stop-color="#c6c9d6"/></linearGradient></defs><path d="M2 5 L15 1 L30 5 L16.5 9.5Z" fill="#dcebe6"/><path d="M2 5 L16.5 9.5 L15.5 29 L3.5 22.5Z" fill="#c2d8d1"/><path d="M16.5 9.5 L30 5 L28 22 L15.5 29Z" fill="#a9c3bb"/></svg>
<svg style="left:97px;top:3px" width="32" height="30" viewBox="0 0 32 30"><defs><linearGradient id="hbx" x1="0" y1="0" x2="1" y2="0"><stop offset="0" stop-color="#a9c3bb"/><stop offset=".45" stop-color="#e4f0ec"/><stop offset="1" stop-color="#9fb9b1"/></linearGradient><linearGradient id="hbxh" x1="0" y1="0" x2="1" y2="1"><stop offset="0" stop-color="#fbfcfe"/><stop offset="1" stop-color="#c6c9d6"/></linearGradient></defs><path d="M21 22 L31 9 L30.5 14 L22 28 L17 26Z" fill="#dfe1e8"/><path d="M0.5 12.5 L13.5 .6 L32 7 L18.5 21.5Z" fill="#2e3488"/><path d="M6.5 12 L14.5 4.5 L26 8.5 L17.5 17.5Z" fill="url(#hbxh)"/><path d="M11 11 L15 7 L21 9.5 L17 14Z" fill="#c9ccd6"/></svg>
<div class="t c" style="left:38px;top:36px">长方体</div>
<div class="t c" style="left:113px;top:36px">孔类长方体</div>
<svg style="left:22px;top:78px" width="32" height="30" viewBox="0 0 32 30"><defs><linearGradient id="csl" x1="0" y1="0" x2="1" y2="0"><stop offset="0" stop-color="#a9c3bb"/><stop offset=".45" stop-color="#e4f0ec"/><stop offset="1" stop-color="#9fb9b1"/></linearGradient><linearGradient id="cslh" x1="0" y1="0" x2="1" y2="1"><stop offset="0" stop-color="#fbfcfe"/><stop offset="1" stop-color="#c6c9d6"/></linearGradient></defs><path d="M1 2 L18 8 L30 25 L9 22Z" fill="#dcebe6"/><path d="M1 2 L9 22 L9.5 24 L1.2 4Z" fill="#a9c3bb"/><path d="M9 22 L30 25 L30 27 L9.5 24Z" fill="#8fa9a2"/></svg>
<svg style="left:97px;top:78px" width="32" height="30" viewBox="0 0 32 30"><defs><linearGradient id="hsl" x1="0" y1="0" x2="1" y2="0"><stop offset="0" stop-color="#a9c3bb"/><stop offset=".45" stop-color="#e4f0ec"/><stop offset="1" stop-color="#9fb9b1"/></linearGradient><linearGradient id="hslh" x1="0" y1="0" x2="1" y2="1"><stop offset="0" stop-color="#fbfcfe"/><stop offset="1" stop-color="#c6c9d6"/></linearGradient></defs><path d="M0.5 17 L13 .8 L32 9 L22 29.5Z" fill="#2e3488"/><path d="M5 16.5 L14.5 4.5 L28 10.5 L20.5 25Z" fill="url(#hslh)"/><path d="M14.5 4.5 L28 10.5 L27 12.5 L14.5 7Z" fill="#fff"/></svg>
<div class="t c" style="left:38px;top:111px">厚板</div>
<div class="t c" style="left:113px;top:111px">孔类厚板</div>
<svg style="left:22px;top:153px" width="32" height="30" viewBox="0 0 32 30"><defs><linearGradient id="cky" x1="0" y1="0" x2="1" y2="0"><stop offset="0" stop-color="#a9c3bb"/><stop offset=".45" stop-color="#e4f0ec"/><stop offset="1" stop-color="#9fb9b1"/></linearGradient><linearGradient id="ckyh" x1="0" y1="0" x2="1" y2="1"><stop offset="0" stop-color="#fbfcfe"/><stop offset="1" stop-color="#c6c9d6"/></linearGradient></defs><path d="M3 6 Q3 1 9 2 L22 5 Q29 7 28 12 L26 25 Q24 29 18 27 L8 24 Q3 22 3 18Z" fill="url(#cky)"/><path d="M3 6 Q3 1 9 2 L22 5 Q29 7 28 12 Q26 15 20 13.5 L8 10.5 Q3 9 3 6Z" fill="#dcebe6"/></svg>
<svg style="left:97px;top:153px" width="32" height="30" viewBox="0 0 32 30"><defs><linearGradient id="hky" x1="0" y1="0" x2="1" y2="0"><stop offset="0" stop-color="#a9c3bb"/><stop offset=".45" stop-color="#e4f0ec"/><stop offset="1" stop-color="#9fb9b1"/></linearGradient><linearGradient id="hkyh" x1="0" y1="0" x2="1" y2="1"><stop offset="0" stop-color="#fbfcfe"/><stop offset="1" stop-color="#c6c9d6"/></linearGradient></defs><path d="M12 21 L26 24 L24 29 L14 27Z" fill="#e2e4ea"/><path d="M1 18 L9 1 L32 7 L25 26Z" fill="#2e3488"/><path d="M7.5 7 Q9 2.5 14 4 L24 15 Q27 20 23 22.5 Q18 24 15.5 20.5Z" fill="url(#hkyh)"/><path d="M9 7.5 Q10 4.5 13.5 5.5 L22 15.5 L19 18Z" fill="#fff" opacity=".8"/></svg>
<div class="t c" style="left:38px;top:186px">键</div>
<div class="t c" style="left:113px;top:186px">孔类键</div>
<svg style="left:22px;top:228px" width="32" height="30" viewBox="0 0 32 30"><defs><linearGradient id="ccy" x1="0" y1="0" x2="1" y2="0"><stop offset="0" stop-color="#a9c3bb"/><stop offset=".45" stop-color="#e4f0ec"/><stop offset="1" stop-color="#9fb9b1"/></linearGradient><linearGradient id="ccyh" x1="0" y1="0" x2="1" y2="1"><stop offset="0" stop-color="#fbfcfe"/><stop offset="1" stop-color="#c6c9d6"/></linearGradient></defs><path d="M2 7 V22 Q4 29 16 29 Q28 28 29 21 L30 7Z" fill="url(#ccy)"/><ellipse cx="16" cy="7" rx="14" ry="6.4" fill="#dcebe6"/></svg>
<svg style="left:97px;top:228px" width="32" height="30" viewBox="0 0 32 30"><defs><linearGradient id="hcy" x1="0" y1="0" x2="1" y2="0"><stop offset="0" stop-color="#a9c3bb"/><stop offset=".45" stop-color="#e4f0ec"/><stop offset="1" stop-color="#9fb9b1"/></linearGradient><linearGradient id="hcyh" x1="0" y1="0" x2="1" y2="1"><stop offset="0" stop-color="#fbfcfe"/><stop offset="1" stop-color="#c6c9d6"/></linearGradient></defs><path d="M9 17 L12 28 L22 28 L26 17Z" fill="#e2e4ea"/><path d="M0.5 13 L16 1 L32 13 L16 26Z" fill="#2e3488"/><ellipse cx="16" cy="13" rx="9" ry="6.6" fill="url(#hcyh)"/><ellipse cx="15.5" cy="15.5" rx="6.4" ry="3.6" fill="#fff"/></svg>
<div class="t c" style="left:38px;top:261px">圆柱体</div>
<div class="t c" style="left:113px;top:261px">孔类圆柱体</div>
<svg style="left:22px;top:303px" width="32" height="30" viewBox="0 0 32 30"><defs><linearGradient id="cec" x1="0" y1="0" x2="1" y2="0"><stop offset="0" stop-color="#a9c3bb"/><stop offset=".45" stop-color="#e4f0ec"/><stop offset="1" stop-color="#9fb9b1"/></linearGradient><linearGradient id="cech" x1="0" y1="0" x2="1" y2="1"><stop offset="0" stop-color="#fbfcfe"/><stop offset="1" stop-color="#c6c9d6"/></linearGradient></defs><path d="M2 13 L3 24 Q6 30 17 28 Q28 25 29 18 L30 6Z" fill="url(#cec)"/><ellipse cx="16" cy="9.5" rx="14.6" ry="6.6" transform="rotate(-16 16 9.5)" fill="#dcebe6"/></svg>
<svg style="left:97px;top:303px" width="32" height="30" viewBox="0 0 32 30"><defs><linearGradient id="hec" x1="0" y1="0" x2="1" y2="0"><stop offset="0" stop-color="#a9c3bb"/><stop offset=".45" stop-color="#e4f0ec"/><stop offset="1" stop-color="#9fb9b1"/></linearGradient><linearGradient id="hech" x1="0" y1="0" x2="1" y2="1"><stop offset="0" stop-color="#fbfcfe"/><stop offset="1" stop-color="#c6c9d6"/></linearGradient></defs><path d="M9 17 L12 28 L22 28 L26 17Z" fill="#e2e4ea"/><path d="M0.5 13 L16 1 L32 13 L16 26Z" fill="#2e3488"/><ellipse cx="16" cy="13.5" rx="9.4" ry="5.4" transform="rotate(-22 16 13.5)" fill="url(#hech)"/><ellipse cx="15" cy="15" rx="6.6" ry="3" transform="rotate(-22 15 15)" fill="#fff"/></svg>
<div class="t c" style="left:38px;top:336px">椭圆柱</div>
<div class="t c" style="left:113px;top:336px">孔类椭圆柱</div>
<svg style="left:22px;top:378px" width="32" height="30" viewBox="0 0 32 30"><path d="M1 11 L9 2 L26 1 L31 8 L20 17Z" fill="#bcd2cb"/><path d="M9 2 L26 1 L31 8 L18 6Z" fill="#a9c3bb"/><path d="M1 11 L9 2 L18 6 L20 17 L16 29 L5 21Z" fill="#dcebe6"/><path d="M20 17 L31 8 L27 18 L16 29Z" fill="#8fa9a2"/></svg>
<svg style="left:97px;top:378px" width="32" height="30" viewBox="0 0 32 30"><defs><linearGradient id="hpr" x1="0" y1="0" x2="1" y2="0"><stop offset="0" stop-color="#a9c3bb"/><stop offset=".45" stop-color="#e4f0ec"/><stop offset="1" stop-color="#9fb9b1"/></linearGradient><linearGradient id="hprh" x1="0" y1="0" x2="1" y2="1"><stop offset="0" stop-color="#fbfcfe"/><stop offset="1" stop-color="#c6c9d6"/></linearGradient></defs><path d="M19 25 Q30 28 31 17 L28 10Z" fill="#d8dae2"/><path d="M1 19 L12 1.5 L32 1 L20 25Z" fill="#2e3488"/><path d="M8 13 L12 6 L19 4 L23 7.5 L21 15 L14 19 L9 18Z" fill="url(#hprh)"/><path d="M11 13 L13.5 8 L18.5 6.5 L20.5 9 L19 14 L14 16.5Z" fill="#eef0f5"/></svg>
<div class="t c" style="left:38px;top:411px">多棱体</div>
<div class="t c" style="left:113px;top:411px">孔类多棱体</div>
<svg style="left:22px;top:453px" width="32" height="30" viewBox="0 0 32 30"><defs><radialGradient id="csp" cx=".38" cy=".35" r=".7"><stop offset="0" stop-color="#f4faf8"/><stop offset=".45" stop-color="#bcd2cc"/><stop offset=".8" stop-color="#9ab4ae"/><stop offset="1" stop-color="#c6dad4"/></radialGradient></defs><circle cx="16" cy="15" r="14" fill="url(#csp)"/><path d="M8 18 Q12 8 22 10 Q16 12 14 20Z" fill="#e8f2ef" opacity=".7"/></svg>
<svg style="left:97px;top:453px" width="32" height="30" viewBox="0 0 32 30"><defs><linearGradient id="hsp" x1="0" y1="0" x2="1" y2="0"><stop offset="0" stop-color="#a9c3bb"/><stop offset=".45" stop-color="#e4f0ec"/><stop offset="1" stop-color="#9fb9b1"/></linearGradient><linearGradient id="hsph" x1="0" y1="0" x2="1" y2="1"><stop offset="0" stop-color="#fbfcfe"/><stop offset="1" stop-color="#c6c9d6"/></linearGradient></defs><path d="M1 15 L16 1 L31 4 L20 12 L8 17Z" fill="#2e3488"/><path d="M8 14 Q10 5 20 4 Q31 5 30 14 Q28 22 22 24 Q17 23 16 18 Q10 19 8 14Z" fill="url(#hsph)"/></svg>
<div class="t c" style="left:38px;top:486px">球体</div>
<div class="t c" style="left:113px;top:486px">孔类球体</div>
<svg style="left:22px;top:528px" width="32" height="30" viewBox="0 0 32 30"><path d="M3 1 L24 6 Q30 9 29 14 L13 13Z" fill="#d6e6e1"/><path d="M3 1 L13 13 L14 29 L6 16Z" fill="#b9cfc8"/><path d="M13 13 L29 14 L27 23 Q22 28 14 29Z" fill="#9db7af"/></svg>
<svg style="left:97px;top:528px" width="32" height="30" viewBox="0 0 32 30"><defs><linearGradient id="hpi" x1="0" y1="0" x2="1" y2="0"><stop offset="0" stop-color="#a9c3bb"/><stop offset=".45" stop-color="#e4f0ec"/><stop offset="1" stop-color="#9fb9b1"/></linearGradient><linearGradient id="hpih" x1="0" y1="0" x2="1" y2="1"><stop offset="0" stop-color="#fbfcfe"/><stop offset="1" stop-color="#c6c9d6"/></linearGradient></defs><path d="M20 8 Q30 6 31 14 Q30 20 22 20Z" fill="#d8dae2"/><path d="M3 1 L23 8 L21 29 L4 20Z" fill="#2e3488"/><path d="M8 12 Q9 6 14 7 Q19 8.5 18.5 15 Q17 22 12 21 Q7.5 19 8 12Z" fill="url(#hpih)"/><path d="M8 14 L13 13.5 L9 17Z" fill="#2e3488"/></svg>
<div class="t c" style="left:38px;top:561px">饼状体</div>
<div class="t c" style="left:113px;top:561px">孔类饼状体</div>
<svg style="left:22px;top:603px" width="32" height="30" viewBox="0 0 32 30"><ellipse cx="16" cy="15" rx="14" ry="13.5" fill="#b4cbc4"/><ellipse cx="15.5" cy="14" rx="13" ry="12.4" fill="#d0e2dc"/><ellipse cx="17" cy="15.5" rx="9" ry="8.6" fill="#9ab4ad"/><ellipse cx="17.5" cy="16" rx="8" ry="7.6" fill="#fff"/></svg>
<svg style="left:97px;top:603px" width="32" height="30" viewBox="0 0 32 30"><defs><linearGradient id="hto" x1="0" y1="0" x2="1" y2="0"><stop offset="0" stop-color="#a9c3bb"/><stop offset=".45" stop-color="#e4f0ec"/><stop offset="1" stop-color="#9fb9b1"/></linearGradient><linearGradient id="htoh" x1="0" y1="0" x2="1" y2="1"><stop offset="0" stop-color="#fbfcfe"/><stop offset="1" stop-color="#c6c9d6"/></linearGradient></defs><path d="M1 18 L9 1 L32 6 L24 28Z" fill="#2e3488"/><ellipse cx="17" cy="14" rx="10.4" ry="9.4" transform="rotate(-20 17 14)" fill="url(#htoh)"/><ellipse cx="16.5" cy="14" rx="4.2" ry="3.8" fill="#2e3488"/></svg>
<div class="t c" style="left:38px;top:636px">圆环</div>
<div class="t c" style="left:113px;top:636px">孔类圆环</div>
<svg style="left:22px;top:678px" width="32" height="30" viewBox="0 0 32 30"><defs><linearGradient id="ccn" x1="0" y1="0" x2="1" y2="1"><stop offset="0" stop-color="#e2efeb"/><stop offset=".6" stop-color="#bdd3cc"/><stop offset="1" stop-color="#a4beb6"/></linearGradient></defs><path d="M28.7 0 L9 8.5 Q2 12.5 2 20 L2 30 L25 30Z" fill="url(#ccn)"/><path d="M28.7 0 L16 14 Q12 20 13 30 L25 30Z" fill="#a9c3bb" opacity=".6"/></svg>
<svg style="left:97px;top:678px" width="32" height="30" viewBox="0 0 32 30"><defs><linearGradient id="hcn" x1="0" y1="0" x2="1" y2="0"><stop offset="0" stop-color="#f2f4f8"/><stop offset="1" stop-color="#bfc3d2"/></linearGradient></defs><path d="M4 19 L16.4 -.5 L27.8 .6 L30 30 L1 30Z" fill="#2e3488"/><path d="M18 3.2 Q10 10 8.4 19 L8 30 L30 30 L27 2.4Z" fill="url(#hcn)"/></svg>
</div>
<div class="a" style="left:1118px;top:914px;width:32px;height:20px;background:#e9f0fa;border-radius:3px"></div>
<div class="t" style="left:1084px;top:918px;color:#1b2f55">动画</div>
<div class="t" style="left:1122px;top:918px;color:#1b2f55">图素</div>
<div class="t" style="left:1159px;top:918px;color:#1b2f55">高级图素</div>
<div class="t" style="left:1220px;top:918px;color:#1b2f55">钣金</div>
<div class="a" style="left:1261px;top:921px;width:8px;height:2px;background:#4a5870"></div><div class="arr" style="left:1261px;top:925px;border-left-width:4px;border-right-width:4px;border-top-width:4px;border-top-color:#4a5870"></div>
<div class="a" style="left:1182px;top:693px;width:90px;height:36px;border-radius:18px;background:linear-gradient(#ffffff,#f4f4f2 70%,#e9e9e6);box-shadow:0 1.5px 4px rgba(0,0,0,.38)"></div>
<div class="a" style="left:1182px;top:695px;width:34px;height:34px;border-radius:17px;background:linear-gradient(#f0f0f0 0,#dedede 33%,#96e445 34%,#7fd82a 60%,#62c012 100%);box-shadow:inset 0 0 3px rgba(0,0,0,.3),0 0 0 1px #c4ccc0"></div>
<div class="a" style="left:1182px;top:706px;width:34px;text-align:center;font-size:10.5px;line-height:12px;color:#1f5a0a">59%</div>
<svg style="left:1219px;top:701px" width="8" height="8"><path d="M4 0 L7.6 3.6 H5.3 V8 H2.7 V3.6 H.4Z" fill="#e8822a"/></svg>
<svg style="left:1219px;top:716px" width="8" height="8"><path d="M4 8 L7.6 4.4 H5.3 V0 H2.7 V4.4 H.4Z" fill="#2c8a3a"/></svg>
<div class="a" style="left:1230px;top:698.5px;font-size:10px;line-height:12px;color:#111;white-space:nowrap;letter-spacing:-.45px">15.8K/S</div>
<div class="a" style="left:1230px;top:713.5px;font-size:10px;line-height:12px;color:#111;white-space:nowrap;letter-spacing:-.45px">15.8K/S</div>
<div class="a" style="left:3px;top:938px;width:1274px;height:22px;background:linear-gradient(#dbe6f5 0,#cddcf0 30%,#c2d4ec 70%,#bccfe9);border-top:1px solid #9fb3d1;border-radius:0 0 0 4px"></div>
<div class="a" style="left:5px;top:941px;font-size:13px;line-height:16px;color:#2a6fc9;text-decoration:underline;white-space:nowrap;letter-spacing:.25px">http://www.caxa.com</div>
<div class="a" style="left:581px;top:941px;width:2px;height:17px;background:linear-gradient(90deg,#a9bbd6 50%,#eef3fb 50%)"></div>
<div class="t" style="left:595px;top:942px;color:#33486e;font-size:12px">视图尺寸:</div>
<div class="t" style="left:655px;top:942px;color:#33486e;font-size:13px;white-space:pre">864 x  742</div>
<div class="t" style="left:733px;top:942px;color:#33486e;font-size:12px">单位: <span style="font-size:13px">mm, deg</span></div>
<svg style="left:826px;top:940px" width="20" height="20" viewBox="0 0 20 20"><circle cx="7.5" cy="7.5" r="6" fill="#f4f6fa" stroke="#4a4a4a" stroke-width="1.6"/><path d="M5 4 H8.5 L10.2 5.8 V11 H5Z" fill="#fff" stroke="#333" stroke-width="1"/><path d="M12 12 L17.5 17.5" stroke="#3a3a3a" stroke-width="2.6" stroke-linecap="round"/></svg>
<svg style="left:849px;top:940px" width="20" height="20" viewBox="0 0 20 20"><circle cx="7.5" cy="7.5" r="6" fill="#f4f6fa" stroke="#4a4a4a" stroke-width="1.6"/><rect x="4.6" y="4.6" width="5.8" height="5.8" fill="#fff" stroke="#555" stroke-width="1"/><path d="M12 12 L17.5 17.5" stroke="#3a3a3a" stroke-width="2.6" stroke-linecap="round"/></svg>
<div class="arr" style="left:873px;top:948px"></div>
<svg style="left:884px;top:941px" width="20" height="18" viewBox="0 0 20 18"><g stroke="#111" stroke-width="1.3" stroke-linejoin="round"><path d="M1 5.5 L4 2 H13.5 L10.5 5.5Z" fill="#fff8b0"/><path d="M10.5 5.5 L13.5 2 V11.5 L10.5 15Z" fill="#e0b400"/><rect x="1" y="5.5" width="9.5" height="9.5" fill="#f8e45a"/></g><path d="M16 4.5 V10.5 M13.2 7.5 H18.8 M14 5.5 L18 9.5 M18 5.5 L14 9.5" stroke="#d81830" stroke-width="1.1"/></svg>
<div class="arr" style="left:908px;top:948px"></div>
<svg style="left:920px;top:941px" width="18" height="18" viewBox="0 0 18 18"><g stroke="#3a6a9a" stroke-width=".9" stroke-linejoin="round"><path d="M1 5 L5 1 H17 L13 5Z" fill="#d4e8f8"/><path d="M13 5 L17 1 V13 L13 17Z" fill="#a8cce8"/><rect x="1" y="5" width="12" height="12" fill="#3a78b8"/></g></svg>
<div class="arr" style="left:943px;top:948px"></div>
<svg style="left:954px;top:940px" width="18" height="20" viewBox="0 0 18 20"><path d="M8 6 Q8.5 1.5 13 2.2 L12.4 .4 L16.6 3 L12.8 6 L12.8 4 Q10.4 3.6 10 6Z" fill="#1c3c78"/><rect x="1" y="8.5" width="15" height="9.5" rx="1" fill="#8a8e96" stroke="#4a4e56" stroke-width="1"/><rect x="3" y="6.6" width="5" height="2.2" fill="#6a6e76"/><circle cx="9.4" cy="13.2" r="3.4" fill="#3a3e46" stroke="#c8ccd4" stroke-width="1"/><circle cx="9.4" cy="13.2" r="1.4" fill="#8a9ab4"/></svg>
<div class="arr" style="left:978px;top:948px"></div>
<svg style="left:990px;top:941px" width="18" height="18" viewBox="0 0 18 18"><g stroke="#3a6a9a" stroke-width=".9" stroke-linejoin="round"><path d="M1 8.5 L11.5 1.5 H17 L7 8.5Z" fill="#d4e8f8"/><path d="M7 8.5 L17 1.5 V8.5 L7 16.5Z" fill="#5a92c8"/><rect x="1" y="8.5" width="6" height="8" fill="#3a78b8"/></g></svg>
<div class="a" style="left:1012px;top:940px;width:31px;height:20px;border:1px solid #e8b040;border-radius:3px;background:linear-gradient(#fde9a8,#fbd670 50%,#fcdc86)"></div>
<svg style="left:1015px;top:942px" width="18" height="18" viewBox="0 0 18 18"><g stroke="#2a3a5a" stroke-width="1" stroke-linejoin="round"><path d="M1 5 L5 1 H16.5 L12.5 5Z" fill="#f2f7fd"/><path d="M12.5 5 L16.5 1 V12 L12.5 16Z" fill="#c8daf0"/><rect x="1" y="5" width="11.5" height="11" fill="#a8c4ea"/></g></svg>
<div class="arr" style="left:1035px;top:948px;border-top-color:#5a4a20"></div>
<svg style="left:1048px;top:941px" width="18" height="18" viewBox="0 0 18 18"><g stroke="#0c2c6a" stroke-width="1" stroke-linejoin="round"><path d="M1 10 L4 7 H16 L13 10Z" fill="#7ab0ec"/><path d="M13 10 L16 7 V13.5 L13 16.5Z" fill="#1c4ea0"/><rect x="1" y="10" width="12" height="6.5" fill="#2a6ac8"/><path d="M4.5 4 L7 1.5 H14 L11.5 4Z" fill="#9ac4f4"/><path d="M11.5 4 L14 1.5 V6.6 L11.5 9Z" fill="#1c4ea0"/><rect x="4.5" y="4" width="7" height="5" fill="#3a7ad8"/></g><rect x="3" y="12" width="6" height="2.4" fill="#bfe0ff"/></svg>
<div class="arr" style="left:1067px;top:948px"></div>
<div class="a" style="left:1079px;top:941px;width:87px;height:18px;background:linear-gradient(90deg,#fff 60%,#e4ecf8);border:1px solid #c5d3e8"></div>
<div class="t" style="left:1082px;top:943px">任意</div><div class="arr" style="left:1157px;top:948px"></div>
<div class="a" style="left:1168px;top:941px;width:65px;height:18px;background:linear-gradient(90deg,#fff 60%,#e4ecf8);border:1px solid #c5d3e8"></div>
<div class="t" style="left:1170px;top:943px;font-size:12.5px">Default</div><div class="arr" style="left:1223px;top:948px"></div>
<svg style="left:1237px;top:942px" width="17" height="16" viewBox="0 0 17 16"><rect x="5.6" y=".8" width="6" height="4.6" fill="#c8283a" stroke="#6a0c18" stroke-width=".9"/><rect x=".8" y="10" width="6" height="4.8" fill="#8ab0ec" stroke="#1c3c8a" stroke-width=".9"/><rect x="10.2" y="10" width="6" height="4.8" fill="#f4e050" stroke="#6a5a00" stroke-width=".9"/><path d="M8.6 5.4 V7.8 M3.8 10 V7.8 H13.2 V10" stroke="#1c3c8a" stroke-width="1.1" fill="none"/></svg>
<div class="a" style="left:1265px;top:947px;width:10px;height:10px;background:radial-gradient(circle at 1px 1px,#9db0cf 1px,transparent 1.2px);background-size:4px 4px;clip-path:polygon(100% 0,100% 100%,0 100%)"></div>
<svg style="left:0;top:954px" width="6" height="6"><path d="M0 0 Q0 6 6 6 H0Z" fill="#33501c"/><path d="M.5 0 Q.5 5.5 6 5.5" fill="none" stroke="#7f90b0" stroke-width="1"/></svg>
<svg style="left:1274px;top:954px" width="6" height="6"><path d="M6 0 Q6 6 0 6 H6Z" fill="#33501c"/><path d="M5.5 0 Q5.5 5.5 0 5.5" fill="none" stroke="#46567a" stroke-width="1"/></svg>
</body></html>
